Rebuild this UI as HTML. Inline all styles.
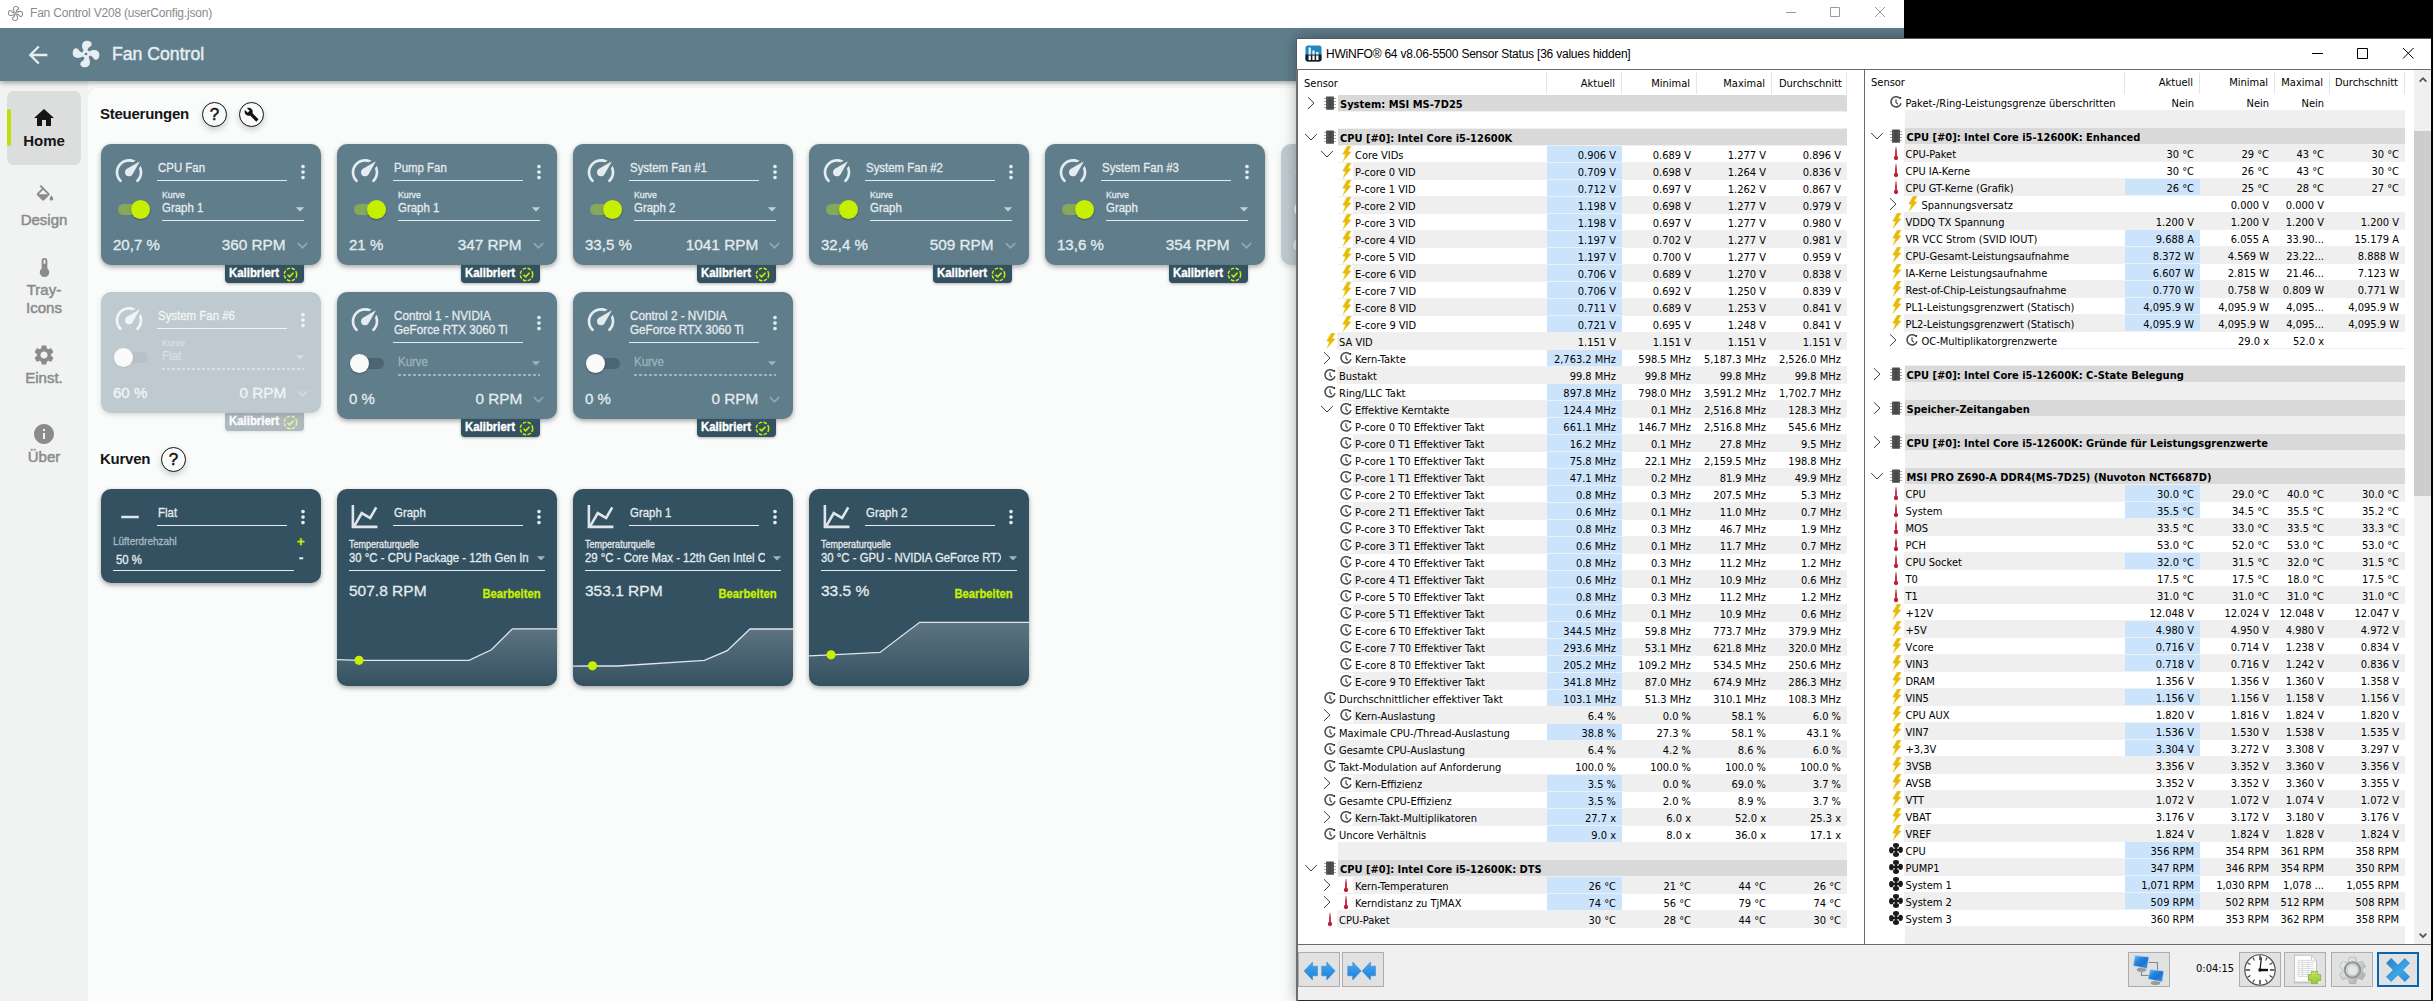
<!DOCTYPE html><html lang="de"><head><meta charset="utf-8"><title>Fan Control</title><style>
*{box-sizing:border-box;margin:0;padding:0}
html,body{width:2433px;height:1001px;overflow:hidden;background:#fff}
body{position:relative;font-family:"Liberation Sans",sans-serif;color:#000}
.abs,.fc *,.hw *{position:absolute}
svg{overflow:visible}
.sx{display:inline-block;position:static!important;transform-origin:0 50%;white-space:pre}
.sxr{display:inline-block;position:static!important;transform-origin:100% 50%;white-space:pre}
/* ---------- Fan Control ---------- */
.fc{position:absolute;left:0;top:0;width:1904px;height:1001px;background:#fafbfb;overflow:hidden}
.fc .tb{left:0;top:0;width:1904px;height:28px;background:#fff}
.fc .tbt{left:30px;top:6px;font-size:12px;line-height:14px;color:#8a8a8a;white-space:pre;letter-spacing:-.2px}
.fc .ab{left:0;top:28px;width:1904px;height:53px;background:#607d8b;box-shadow:0 2px 5px rgba(0,0,0,.35)}
.fc .abt{-webkit-text-stroke:.45px;left:112px;top:43px;font-size:18px;line-height:22px;color:#e6eef1;white-space:pre}
.fc .side{left:0;top:81px;width:88px;height:920px;background:#f1f3f3}
.fc .main{left:88px;top:88px;width:1816px;height:913px;background:#fafbfb;border-top-left-radius:9px;box-shadow:-1px 0 2px rgba(0,0,0,.10)}
.fc .nb{left:7px;width:74px;text-align:center;font-weight:400;-webkit-text-stroke:.5px;font-size:15px;line-height:18px;color:#8b8b8b;white-space:pre}
.fc .home{left:7px;top:91px;width:74px;height:74px;background:#dcdddd;border-radius:7px}
.fc .acc{left:7px;top:109px;width:4px;height:37px;background:#bfdf0a;border-radius:2px}
.fc .h1{margin-top:-1px;letter-spacing:-.25px;font-weight:700;font-size:15px;line-height:18px;color:#151515;white-space:pre}
.fc .cbtn{width:25px;height:25px;border-radius:50%;border:1.600px solid #111;background:#fafbfb;box-shadow:0 3px 6px rgba(0,0,0,.18)}
.card{-webkit-text-stroke:.3px;position:absolute;width:220px;border-radius:10px;background:#607d8b;box-shadow:0 2px 5px rgba(0,0,0,.35);color:#e4ecef}
.card.dk{background:#345161}
.card.dis{opacity:.38}
.card .nm{left:57px;top:16px;font-size:13px;line-height:15px;white-space:pre}
.card .nm2{left:57px;top:17px;font-size:13px;line-height:14px;white-space:pre}
.card .ul{left:56px;height:1px;width:130px;background:#e4ecef}
.card .lbl{left:61px;top:45px;font-size:9.5px;line-height:11px;white-space:pre}
.card .sel{left:61px;top:56px;font-size:13px;line-height:15px;white-space:pre}
.card .sul{left:61px;top:76px;width:142px;height:1px;background:#e4ecef}
.card .big{font-size:15.5px;line-height:18px;white-space:pre}
.tag{-webkit-text-stroke:.35px;position:absolute;width:79px;height:18px;background:#345161;border-radius:0 0 4px 4px;box-shadow:0 1px 3px rgba(0,0,0,.3);color:#fff;font-weight:700;font-size:12px;line-height:17px}
.tag.dis{opacity:.38}
.tag .t{left:4px;top:0;white-space:pre}
.lime{color:#c6f000}
/* ---------- HWiNFO ---------- */
.hw{position:absolute;left:1297px;top:38px;width:1136px;height:963px;background:#f0f0f0;border:1px solid #4f5b62;box-shadow:0 0 14px rgba(0,0,0,.35)}
.hwl{position:absolute;left:0;top:0;width:2433px;height:1001px;font-family:"DejaVu Sans Condensed","Liberation Sans",sans-serif;font-size:11px;line-height:16px;pointer-events:none}
.hwl>*{position:absolute;white-space:pre}
.hwl .st{height:16px;background:#efefef}
.hwl .gh{height:16px;background:#d9d9d9}
.hwl .hl{height:16px;background:#cce4fb}
.hwl .gt{font-weight:700;height:17px;line-height:20px}
.hwl .nm{height:17px;line-height:20px}
.hwl .v{height:17px;line-height:20px;text-align:right}
.hwl .ic{height:17px}
.hwl .ch{height:20px;line-height:20px;top:73px}
.hwl .chr{height:20px;line-height:20px;top:73px;text-align:right}
.hwl .sep{top:72px;width:1px;height:22px;background:#e5e5e5}
.tbb{width:42px;height:35px;background:#e1e1e1;border:1px solid #adadad}

</style></head><body>
<svg width="0" height="0" style="position:absolute"><defs><path id="p-home" d="M10 20v-6h4v6h5v-8h3L12 3 2 12h3v8z"/><path id="p-fill" d="M16.56 8.94L7.62 0 6.21 1.41l2.38 2.38-5.15 5.15c-.59.59-.59 1.54 0 2.12l5.5 5.5c.29.29.68.44 1.06.44s.77-.15 1.06-.44l5.5-5.5c.59-.58.59-1.53 0-2.12zM5.21 10L10 5.21 14.79 10H5.21zM19 11.5s-2 2.17-2 3.5c0 1.1.9 2 2 2s2-.9 2-2c0-1.33-2-3.5-2-3.5z"/><path id="p-therm" d="M15 13V5a3 3 0 0 0-6 0v8a5 5 0 1 0 6 0m-3-9a1 1 0 0 1 1 1v3h-2V5a1 1 0 0 1 1-1z"/><path id="p-gear" d="M19.14,12.94c0.04-0.3,0.06-0.61,0.06-0.94c0-0.32-0.02-0.64-0.07-0.94l2.03-1.58c0.18-0.14,0.23-0.41,0.12-0.61 l-1.92-3.32c-0.12-0.22-0.37-0.29-0.59-0.22l-2.39,0.96c-0.5-0.38-1.03-0.7-1.62-0.94L14.4,2.81c-0.04-0.24-0.24-0.41-0.48-0.41 h-3.84c-0.24,0-0.43,0.17-0.47,0.41L9.25,5.35C8.66,5.59,8.12,5.92,7.63,6.29L5.24,5.33c-0.22-0.08-0.47,0-0.59,0.22L2.74,8.87 C2.62,9.08,2.66,9.34,2.86,9.48l2.03,1.58C4.84,11.36,4.8,11.69,4.8,12s0.02,0.64,0.07,0.94l-2.03,1.58 c-0.18,0.14-0.23,0.41-0.12,0.61l1.92,3.32c0.12,0.22,0.37,0.29,0.59,0.22l2.39-0.96c0.5,0.38,1.03,0.7,1.62,0.94l0.36,2.54 c0.05,0.24,0.24,0.41,0.48,0.41h3.84c0.24,0,0.44-0.17,0.47-0.41l0.36-2.54c0.59-0.24,1.13-0.56,1.62-0.94l2.39,0.96 c0.22,0.08,0.47,0,0.59-0.22l1.92-3.32c0.12-0.22,0.07-0.47-0.12-0.61L19.14,12.94z M12,15.6c-1.98,0-3.6-1.62-3.6-3.6 s1.62-3.6,3.6-3.6s3.6,1.62,3.6,3.6S13.98,15.6,12,15.6z"/><path id="p-info" d="M12 2C6.48 2 2 6.48 2 12s4.48 10 10 10 10-4.48 10-10S17.52 2 12 2zm1 15h-2v-6h2v6zm0-8h-2V7h2v2z"/><path id="p-back" d="M20 11H7.83l5.59-5.59L12 4l-8 8 8 8 1.41-1.41L7.83 13H20v-2z"/><path id="p-fan" d="M12,11A1,1 0 0,0 11,12A1,1 0 0,0 12,13A1,1 0 0,0 13,12A1,1 0 0,0 12,11M12.5,2C17,2 17.11,5.57 14.75,6.75C13.76,7.24 13.32,8.29 13.13,9.22C13.61,9.42 14.03,9.73 14.35,10.13C18.05,8.13 22.03,8.92 22.03,12.5C22.03,17 18.46,17.1 17.28,14.73C16.78,13.74 15.72,13.3 14.79,13.11C14.59,13.59 14.28,14 13.88,14.34C15.87,18.03 15.08,22 11.5,22C7,22 6.91,18.42 9.27,17.24C10.25,16.75 10.69,15.71 10.89,14.79C10.4,14.59 9.97,14.27 9.65,13.87C5.96,15.85 2,15.07 2,11.5C2,7 5.56,6.89 6.74,9.26C7.24,10.25 8.29,10.68 9.22,10.87C9.41,10.39 9.73,9.97 10.14,9.65C8.15,5.96 8.94,2 12.5,2Z"/><path id="p-gauge" d="M12,16A3,3 0 0,1 9,13C9,11.88 9.61,10.9 10.5,10.39L20.21,4.77L14.68,14.35C14.18,15.33 13.17,16 12,16M12,3C13.81,3 15.5,3.5 16.97,4.32L14.87,5.53C14,5.19 13,5 12,5A8,8 0 0,0 4,13C4,15.21 4.89,17.21 6.34,18.65H6.35C6.74,19.04 6.74,19.67 6.35,20.06C5.96,20.45 5.32,20.45 4.93,20.07V20.07C3.12,18.26 2,15.76 2,13A10,10 0 0,1 12,3M22,13C22,15.76 20.88,18.26 19.07,20.07V20.07C18.68,20.45 18.05,20.45 17.66,20.06C17.27,19.67 17.27,19.04 17.66,18.65V18.65C19.11,17.2 20,15.21 20,13C20,12 19.81,11 19.46,10.1L20.67,8C21.5,9.5 22,11.18 22,13Z"/><path id="p-wrench" d="M22.7,19L13.6,9.9C14.5,7.6 14,4.9 12.1,3C10.1,1 7.1,0.6 4.7,1.7L9,6L6,9L1.6,4.7C0.4,7.1 0.9,10.1 2.9,12.1C4.8,14 7.5,14.5 9.8,13.6L18.9,22.7C19.3,23.1 19.9,23.1 20.3,22.7L22.6,20.4C23.1,20 23.1,19.3 22.7,19Z"/><path id="p-chart" d="M16,11.78L20.24,4.45L21.97,5.45L16.74,14.5L10.23,10.75L5.46,19H22V21H2V3H4V17.54L9.5,8L16,11.78Z"/><path id="p-chev" d="M7.41 8.59L12 13.17l4.59-4.59L18 10l-6 6-6-6z"/><path id="p-drop" d="M7 10l5 5 5-5z"/><path id="p-minus" d="M19 13H5v-2h14v2z"/><path id="p-dots" d="M12 8c1.1 0 2-.9 2-2s-.9-2-2-2-2 .9-2 2 .9 2 2 2zm0 2c-1.1 0-2 .9-2 2s.9 2 2 2 2-.9 2-2-.9-2-2-2zm0 6c-1.1 0-2 .9-2 2s.9 2 2 2 2-.9 2-2-.9-2-2-2z"/><linearGradient id="gfill" x1="0" y1="0" x2="0" y2="1"><stop offset="0" stop-color="#fff" stop-opacity=".2"/><stop offset="1" stop-color="#fff" stop-opacity="0"/></linearGradient></defs></svg>
<div class="fc">
<div class="main"></div>
<div class="side"></div>
<div class="ab"></div>
<div class="tb"></div>
<svg style="left:7px;top:5px" width="17" height="17" viewBox="0 0 24 24" fill="none" stroke="#8a8a8a" stroke-width="1.5"><use href="#p-fan"/></svg>
<div class="tbt">Fan Control V208 (userConfig.json)</div>
<svg style="left:1786px;top:6px" width="100" height="12" viewBox="0 0 100 12" fill="none" stroke="#9a9a9a" stroke-width="1"><path d="M0 6.5h10M44.5 1.5h9v9h-9zM89 1l10 10M99 1l-10 10"/></svg>
<svg style="left:24px;top:40.5px" width="28" height="28" viewBox="0 0 24 24" fill="#e6eef1" ><use href="#p-back"/></svg>
<svg style="left:70px;top:38px" width="32" height="32" viewBox="0 0 24 24" fill="#e6eef1" ><use href="#p-fan"/></svg>
<div class="abt"><span class="sx" style="transform:scaleX(0.98)">Fan Control</span></div>
<div class="home"></div><div class="acc"></div>
<svg style="left:32px;top:106px" width="24" height="24" viewBox="0 0 24 24" fill="#151515" ><use href="#p-home"/></svg>
<div class="nb" style="top:132px;color:#151515;font-weight:700;-webkit-text-stroke:0">Home</div>
<svg style="left:33.5px;top:185px" width="22" height="22" viewBox="0 0 24 24" fill="#8b8b8b" ><use href="#p-fill"/></svg>
<div class="nb" style="top:211px">Design</div>
<svg style="left:33px;top:256px" width="23" height="23" viewBox="0 0 24 24" fill="#8b8b8b" ><use href="#p-therm"/></svg>
<div class="nb" style="top:281px">Tray-</div><div class="nb" style="top:299px">Icons</div>
<svg style="left:32px;top:343px" width="24" height="24" viewBox="0 0 24 24" fill="#8b8b8b" ><use href="#p-gear"/></svg>
<div class="nb" style="top:369px">Einst.</div>
<svg style="left:32px;top:422px" width="24" height="24" viewBox="0 0 24 24" fill="#8b8b8b" ><use href="#p-info"/></svg>
<div class="nb" style="top:448px">Über</div>
<div class="h1" style="left:100px;top:106px">Steuerungen</div>
<div class="cbtn" style="left:202px;top:102px"></div><div style="left:202px;top:102px;width:25px;height:25px;text-align:center;font-weight:400;-webkit-text-stroke:.5px;font-size:17px;line-height:25px;color:#111">?</div>
<div class="cbtn" style="left:239px;top:102px"></div><svg style="left:244px;top:107px" width="15" height="15" viewBox="0 0 24 24" fill="#111" ><use href="#p-wrench"/></svg>
<div class="h1" style="left:100px;top:451px">Kurven</div>
<div class="cbtn" style="left:161px;top:447px"></div><div style="left:161px;top:447px;width:25px;height:25px;text-align:center;font-weight:400;-webkit-text-stroke:.5px;font-size:17px;line-height:25px;color:#111">?</div>
<div class="card" style="left:101px;top:144px;height:121px"><svg style="left:12px;top:11px" width="32" height="32" viewBox="0 0 24 24" fill="#e4ecef" ><use href="#p-gauge"/></svg><div class="nm"><span class="sx" style="transform:scaleX(0.88)">CPU Fan</span></div><div class="ul" style="top:36px"></div><svg style="left:191px;top:17px" width="22" height="22" viewBox="0 0 24 24" fill="#e4ecef" ><use href="#p-dots"/></svg><div style="left:17px;top:60px;width:30px;height:11px;border-radius:6px;background:#86a85a"></div><div style="left:30px;top:56px;width:19px;height:19px;border-radius:50%;background:#c6f000;box-shadow:0 1px 2px rgba(0,0,0,.3)"></div><div class="lbl"><span class="sx" style="transform:scaleX(0.92)">Kurve</span></div><div class="sel"><span class="sx" style="transform:scaleX(0.88)">Graph 1</span></div><svg style="left:189px;top:55px" width="20" height="20" viewBox="0 0 24 24" fill="#c3d0d6" ><use href="#p-drop"/></svg><div class="sul"></div><div class="big" style="left:12px;top:92px"><span class="sx" style="transform:scaleX(0.97)">20,7 %</span></div><div class="big" style="right:35px;top:92px;text-align:right"><span class="sxr" style="transform:scaleX(0.99)">360 RPM</span></div><svg style="left:191px;top:91px" width="21" height="21" viewBox="0 0 24 24" fill="#8fa6b1" ><use href="#p-chev"/></svg></div><div class="tag" style="left:225px;top:265px"><div class="t"><span class="sx" style="transform:scaleX(0.95)">Kalibriert</span></div><svg style="left:58px;top:1.500px" width="15" height="15" viewBox="0 0 14 14" fill="none" stroke="#c6f000" stroke-width="1.4"><circle cx="7" cy="7" r="5.8" stroke-dasharray="3.2 1.4"/><path d="M4.2 7.2l2 2 3.6-3.9" stroke-width="1.5"/></svg></div>
<div class="card" style="left:337px;top:144px;height:121px"><svg style="left:12px;top:11px" width="32" height="32" viewBox="0 0 24 24" fill="#e4ecef" ><use href="#p-gauge"/></svg><div class="nm"><span class="sx" style="transform:scaleX(0.88)">Pump Fan</span></div><div class="ul" style="top:36px"></div><svg style="left:191px;top:17px" width="22" height="22" viewBox="0 0 24 24" fill="#e4ecef" ><use href="#p-dots"/></svg><div style="left:17px;top:60px;width:30px;height:11px;border-radius:6px;background:#86a85a"></div><div style="left:30px;top:56px;width:19px;height:19px;border-radius:50%;background:#c6f000;box-shadow:0 1px 2px rgba(0,0,0,.3)"></div><div class="lbl"><span class="sx" style="transform:scaleX(0.92)">Kurve</span></div><div class="sel"><span class="sx" style="transform:scaleX(0.88)">Graph 1</span></div><svg style="left:189px;top:55px" width="20" height="20" viewBox="0 0 24 24" fill="#c3d0d6" ><use href="#p-drop"/></svg><div class="sul"></div><div class="big" style="left:12px;top:92px"><span class="sx" style="transform:scaleX(0.97)">21 %</span></div><div class="big" style="right:35px;top:92px;text-align:right"><span class="sxr" style="transform:scaleX(0.99)">347 RPM</span></div><svg style="left:191px;top:91px" width="21" height="21" viewBox="0 0 24 24" fill="#8fa6b1" ><use href="#p-chev"/></svg></div><div class="tag" style="left:461px;top:265px"><div class="t"><span class="sx" style="transform:scaleX(0.95)">Kalibriert</span></div><svg style="left:58px;top:1.500px" width="15" height="15" viewBox="0 0 14 14" fill="none" stroke="#c6f000" stroke-width="1.4"><circle cx="7" cy="7" r="5.8" stroke-dasharray="3.2 1.4"/><path d="M4.2 7.2l2 2 3.6-3.9" stroke-width="1.5"/></svg></div>
<div class="card" style="left:573px;top:144px;height:121px"><svg style="left:12px;top:11px" width="32" height="32" viewBox="0 0 24 24" fill="#e4ecef" ><use href="#p-gauge"/></svg><div class="nm"><span class="sx" style="transform:scaleX(0.88)">System Fan #1</span></div><div class="ul" style="top:36px"></div><svg style="left:191px;top:17px" width="22" height="22" viewBox="0 0 24 24" fill="#e4ecef" ><use href="#p-dots"/></svg><div style="left:17px;top:60px;width:30px;height:11px;border-radius:6px;background:#86a85a"></div><div style="left:30px;top:56px;width:19px;height:19px;border-radius:50%;background:#c6f000;box-shadow:0 1px 2px rgba(0,0,0,.3)"></div><div class="lbl"><span class="sx" style="transform:scaleX(0.92)">Kurve</span></div><div class="sel"><span class="sx" style="transform:scaleX(0.88)">Graph 2</span></div><svg style="left:189px;top:55px" width="20" height="20" viewBox="0 0 24 24" fill="#c3d0d6" ><use href="#p-drop"/></svg><div class="sul"></div><div class="big" style="left:12px;top:92px"><span class="sx" style="transform:scaleX(0.97)">33,5 %</span></div><div class="big" style="right:35px;top:92px;text-align:right"><span class="sxr" style="transform:scaleX(0.99)">1041 RPM</span></div><svg style="left:191px;top:91px" width="21" height="21" viewBox="0 0 24 24" fill="#8fa6b1" ><use href="#p-chev"/></svg></div><div class="tag" style="left:697px;top:265px"><div class="t"><span class="sx" style="transform:scaleX(0.95)">Kalibriert</span></div><svg style="left:58px;top:1.500px" width="15" height="15" viewBox="0 0 14 14" fill="none" stroke="#c6f000" stroke-width="1.4"><circle cx="7" cy="7" r="5.8" stroke-dasharray="3.2 1.4"/><path d="M4.2 7.2l2 2 3.6-3.9" stroke-width="1.5"/></svg></div>
<div class="card" style="left:809px;top:144px;height:121px"><svg style="left:12px;top:11px" width="32" height="32" viewBox="0 0 24 24" fill="#e4ecef" ><use href="#p-gauge"/></svg><div class="nm"><span class="sx" style="transform:scaleX(0.88)">System Fan #2</span></div><div class="ul" style="top:36px"></div><svg style="left:191px;top:17px" width="22" height="22" viewBox="0 0 24 24" fill="#e4ecef" ><use href="#p-dots"/></svg><div style="left:17px;top:60px;width:30px;height:11px;border-radius:6px;background:#86a85a"></div><div style="left:30px;top:56px;width:19px;height:19px;border-radius:50%;background:#c6f000;box-shadow:0 1px 2px rgba(0,0,0,.3)"></div><div class="lbl"><span class="sx" style="transform:scaleX(0.92)">Kurve</span></div><div class="sel"><span class="sx" style="transform:scaleX(0.88)">Graph</span></div><svg style="left:189px;top:55px" width="20" height="20" viewBox="0 0 24 24" fill="#c3d0d6" ><use href="#p-drop"/></svg><div class="sul"></div><div class="big" style="left:12px;top:92px"><span class="sx" style="transform:scaleX(0.97)">32,4 %</span></div><div class="big" style="right:35px;top:92px;text-align:right"><span class="sxr" style="transform:scaleX(0.99)">509 RPM</span></div><svg style="left:191px;top:91px" width="21" height="21" viewBox="0 0 24 24" fill="#8fa6b1" ><use href="#p-chev"/></svg></div><div class="tag" style="left:933px;top:265px"><div class="t"><span class="sx" style="transform:scaleX(0.95)">Kalibriert</span></div><svg style="left:58px;top:1.500px" width="15" height="15" viewBox="0 0 14 14" fill="none" stroke="#c6f000" stroke-width="1.4"><circle cx="7" cy="7" r="5.8" stroke-dasharray="3.2 1.4"/><path d="M4.2 7.2l2 2 3.6-3.9" stroke-width="1.5"/></svg></div>
<div class="card" style="left:1045px;top:144px;height:121px"><svg style="left:12px;top:11px" width="32" height="32" viewBox="0 0 24 24" fill="#e4ecef" ><use href="#p-gauge"/></svg><div class="nm"><span class="sx" style="transform:scaleX(0.88)">System Fan #3</span></div><div class="ul" style="top:36px"></div><svg style="left:191px;top:17px" width="22" height="22" viewBox="0 0 24 24" fill="#e4ecef" ><use href="#p-dots"/></svg><div style="left:17px;top:60px;width:30px;height:11px;border-radius:6px;background:#86a85a"></div><div style="left:30px;top:56px;width:19px;height:19px;border-radius:50%;background:#c6f000;box-shadow:0 1px 2px rgba(0,0,0,.3)"></div><div class="lbl"><span class="sx" style="transform:scaleX(0.92)">Kurve</span></div><div class="sel"><span class="sx" style="transform:scaleX(0.88)">Graph</span></div><svg style="left:189px;top:55px" width="20" height="20" viewBox="0 0 24 24" fill="#c3d0d6" ><use href="#p-drop"/></svg><div class="sul"></div><div class="big" style="left:12px;top:92px"><span class="sx" style="transform:scaleX(0.97)">13,6 %</span></div><div class="big" style="right:35px;top:92px;text-align:right"><span class="sxr" style="transform:scaleX(0.99)">354 RPM</span></div><svg style="left:191px;top:91px" width="21" height="21" viewBox="0 0 24 24" fill="#8fa6b1" ><use href="#p-chev"/></svg></div><div class="tag" style="left:1169px;top:265px"><div class="t"><span class="sx" style="transform:scaleX(0.95)">Kalibriert</span></div><svg style="left:58px;top:1.500px" width="15" height="15" viewBox="0 0 14 14" fill="none" stroke="#c6f000" stroke-width="1.4"><circle cx="7" cy="7" r="5.8" stroke-dasharray="3.2 1.4"/><path d="M4.2 7.2l2 2 3.6-3.9" stroke-width="1.5"/></svg></div>
<div class="card dis" style="left:1281px;top:144px;height:121px"><svg style="left:12px;top:11px" width="32" height="32" viewBox="0 0 24 24" fill="#e4ecef" ><use href="#p-gauge"/></svg><div class="nm"><span class="sx" style="transform:scaleX(0.88)">System Fan #4</span></div><div class="ul" style="top:36px"></div><svg style="left:191px;top:17px" width="22" height="22" viewBox="0 0 24 24" fill="#e4ecef" ><use href="#p-dots"/></svg><div style="left:17px;top:60px;width:30px;height:11px;border-radius:6px;background:#4b6572"></div><div style="left:13px;top:56px;width:19px;height:19px;border-radius:50%;background:#fafafa;box-shadow:0 1px 2px rgba(0,0,0,.3)"></div><div class="lbl" style="color:#9fb3bd"><span class="sx" style="transform:scaleX(0.92)">Kurve</span></div><div class="sel" style="color:#9fb3bd"><span class="sx" style="transform:scaleX(0.88)">Flat</span></div><svg style="left:189px;top:55px" width="20" height="20" viewBox="0 0 24 24" fill="#9fb3bd" ><use href="#p-drop"/></svg><div class="sul" style="height:1.500px;background:repeating-linear-gradient(90deg,#9fb3bd 0 3px,transparent 3px 5px)"></div><div class="big" style="left:12px;top:92px"><span class="sx" style="transform:scaleX(0.97)">60 %</span></div><div class="big" style="right:35px;top:92px;text-align:right"><span class="sxr" style="transform:scaleX(0.99)">0 RPM</span></div><svg style="left:191px;top:91px" width="21" height="21" viewBox="0 0 24 24" fill="#8fa6b1" ><use href="#p-chev"/></svg></div><div class="tag dis" style="left:1405px;top:265px"><div class="t"><span class="sx" style="transform:scaleX(0.95)">Kalibriert</span></div><svg style="left:58px;top:1.500px" width="15" height="15" viewBox="0 0 14 14" fill="none" stroke="#c6f000" stroke-width="1.4"><circle cx="7" cy="7" r="5.8" stroke-dasharray="3.2 1.4"/><path d="M4.2 7.2l2 2 3.6-3.9" stroke-width="1.5"/></svg></div>
<div class="card dis" style="left:101px;top:292px;height:121px"><svg style="left:12px;top:11px" width="32" height="32" viewBox="0 0 24 24" fill="#e4ecef" ><use href="#p-gauge"/></svg><div class="nm"><span class="sx" style="transform:scaleX(0.88)">System Fan #6</span></div><div class="ul" style="top:36px"></div><svg style="left:191px;top:17px" width="22" height="22" viewBox="0 0 24 24" fill="#e4ecef" ><use href="#p-dots"/></svg><div style="left:17px;top:60px;width:30px;height:11px;border-radius:6px;background:#4b6572"></div><div style="left:13px;top:56px;width:19px;height:19px;border-radius:50%;background:#fafafa;box-shadow:0 1px 2px rgba(0,0,0,.3)"></div><div class="lbl" style="color:#9fb3bd"><span class="sx" style="transform:scaleX(0.92)">Kurve</span></div><div class="sel" style="color:#9fb3bd"><span class="sx" style="transform:scaleX(0.88)">Flat</span></div><svg style="left:189px;top:55px" width="20" height="20" viewBox="0 0 24 24" fill="#9fb3bd" ><use href="#p-drop"/></svg><div class="sul" style="height:1.500px;background:repeating-linear-gradient(90deg,#9fb3bd 0 3px,transparent 3px 5px)"></div><div class="big" style="left:12px;top:92px"><span class="sx" style="transform:scaleX(0.97)">60 %</span></div><div class="big" style="right:35px;top:92px;text-align:right"><span class="sxr" style="transform:scaleX(0.99)">0 RPM</span></div><svg style="left:191px;top:91px" width="21" height="21" viewBox="0 0 24 24" fill="#8fa6b1" ><use href="#p-chev"/></svg></div><div class="tag dis" style="left:225px;top:413px"><div class="t"><span class="sx" style="transform:scaleX(0.95)">Kalibriert</span></div><svg style="left:58px;top:1.500px" width="15" height="15" viewBox="0 0 14 14" fill="none" stroke="#c6f000" stroke-width="1.4"><circle cx="7" cy="7" r="5.8" stroke-dasharray="3.2 1.4"/><path d="M4.2 7.2l2 2 3.6-3.9" stroke-width="1.5"/></svg></div>
<div class="card" style="left:337px;top:292px;height:127px"><svg style="left:12px;top:12px" width="32" height="32" viewBox="0 0 24 24" fill="#e4ecef" ><use href="#p-gauge"/></svg><div class="nm2"><span class="sx" style="transform:scaleX(0.9)">Control 1 - NVIDIA</span><br><span class="sx" style="transform:scaleX(0.9)">GeForce RTX 3060 Ti</span></div><div class="ul" style="top:50px"></div><svg style="left:191px;top:20px" width="22" height="22" viewBox="0 0 24 24" fill="#e4ecef" ><use href="#p-dots"/></svg><div style="left:17px;top:66px;width:30px;height:11px;border-radius:6px;background:#4b6572"></div><div style="left:13px;top:62px;width:19px;height:19px;border-radius:50%;background:#fafafa;box-shadow:0 1px 2px rgba(0,0,0,.3)"></div><div class="sel" style="color:#9fb3bd;top:62px"><span class="sx" style="transform:scaleX(0.88)">Kurve</span></div><svg style="left:189px;top:61px" width="20" height="20" viewBox="0 0 24 24" fill="#9fb3bd" ><use href="#p-drop"/></svg><div class="sul" style="top:82px;height:1.500px;background:repeating-linear-gradient(90deg,#9fb3bd 0 3px,transparent 3px 5px)"></div><div class="big" style="left:12px;top:98px"><span class="sx" style="transform:scaleX(0.97)">0 %</span></div><div class="big" style="right:35px;top:98px;text-align:right"><span class="sxr" style="transform:scaleX(0.99)">0 RPM</span></div><svg style="left:191px;top:97px" width="21" height="21" viewBox="0 0 24 24" fill="#8fa6b1" ><use href="#p-chev"/></svg></div><div class="tag" style="left:461px;top:419px"><div class="t"><span class="sx" style="transform:scaleX(0.95)">Kalibriert</span></div><svg style="left:58px;top:1.500px" width="15" height="15" viewBox="0 0 14 14" fill="none" stroke="#c6f000" stroke-width="1.4"><circle cx="7" cy="7" r="5.8" stroke-dasharray="3.2 1.4"/><path d="M4.2 7.2l2 2 3.6-3.9" stroke-width="1.5"/></svg></div>
<div class="card" style="left:573px;top:292px;height:127px"><svg style="left:12px;top:12px" width="32" height="32" viewBox="0 0 24 24" fill="#e4ecef" ><use href="#p-gauge"/></svg><div class="nm2"><span class="sx" style="transform:scaleX(0.9)">Control 2 - NVIDIA</span><br><span class="sx" style="transform:scaleX(0.9)">GeForce RTX 3060 Ti</span></div><div class="ul" style="top:50px"></div><svg style="left:191px;top:20px" width="22" height="22" viewBox="0 0 24 24" fill="#e4ecef" ><use href="#p-dots"/></svg><div style="left:17px;top:66px;width:30px;height:11px;border-radius:6px;background:#4b6572"></div><div style="left:13px;top:62px;width:19px;height:19px;border-radius:50%;background:#fafafa;box-shadow:0 1px 2px rgba(0,0,0,.3)"></div><div class="sel" style="color:#9fb3bd;top:62px"><span class="sx" style="transform:scaleX(0.88)">Kurve</span></div><svg style="left:189px;top:61px" width="20" height="20" viewBox="0 0 24 24" fill="#9fb3bd" ><use href="#p-drop"/></svg><div class="sul" style="top:82px;height:1.500px;background:repeating-linear-gradient(90deg,#9fb3bd 0 3px,transparent 3px 5px)"></div><div class="big" style="left:12px;top:98px"><span class="sx" style="transform:scaleX(0.97)">0 %</span></div><div class="big" style="right:35px;top:98px;text-align:right"><span class="sxr" style="transform:scaleX(0.99)">0 RPM</span></div><svg style="left:191px;top:97px" width="21" height="21" viewBox="0 0 24 24" fill="#8fa6b1" ><use href="#p-chev"/></svg></div><div class="tag" style="left:697px;top:419px"><div class="t"><span class="sx" style="transform:scaleX(0.95)">Kalibriert</span></div><svg style="left:58px;top:1.500px" width="15" height="15" viewBox="0 0 14 14" fill="none" stroke="#c6f000" stroke-width="1.4"><circle cx="7" cy="7" r="5.8" stroke-dasharray="3.2 1.4"/><path d="M4.2 7.2l2 2 3.6-3.9" stroke-width="1.5"/></svg></div>
<div class="card dk" style="left:101px;top:489px;height:94px">
<svg style="left:13.5px;top:13px" width="30" height="30" viewBox="0 0 24 24" fill="#dfe6e9" ><use href="#p-minus"/></svg>
<div class="nm"><span class="sx" style="transform:scaleX(0.88)">Flat</span></div><div class="ul" style="top:36px"></div>
<svg style="left:191px;top:17px" width="22" height="22" viewBox="0 0 24 24" fill="#e4ecef" ><use href="#p-dots"/></svg>
<div class="lbl" style="left:12px;top:47px;color:#a9bac3;font-size:10.500px"><span class="sx" style="transform:scaleX(0.95)">Lüfterdrehzahl</span></div>
<div class="sel" style="left:15px;top:64px;font-size:12px"><span class="sx" style="transform:scaleX(0.95)">50 %</span></div>
<div class="sul" style="left:12px;top:81px;width:181px"></div>
<div class="lime" style="left:196px;top:46px;font-weight:700;font-size:13px;line-height:14px">+</div>
<div style="left:198px;top:62px;font-weight:700;font-size:13px;line-height:14px;color:#e4ecef">-</div>
</div>
<div class="card dk" style="left:337px;top:489px;height:197px;overflow:hidden"><svg style="left:12px;top:12px" width="31" height="31" viewBox="0 0 24 24" fill="#dfe6e9" ><use href="#p-chart"/></svg><div class="nm"><span class="sx" style="transform:scaleX(0.88)">Graph</span></div><div class="ul" style="top:36px"></div><svg style="left:191px;top:17px" width="22" height="22" viewBox="0 0 24 24" fill="#e4ecef" ><use href="#p-dots"/></svg><div class="lbl" style="left:12px;top:50px;font-size:10.500px"><span class="sx" style="transform:scaleX(0.86)">Temperaturquelle</span></div><div class="sel" style="left:12px;top:61px;width:180px;overflow:hidden"><span class="sx" style="transform:scaleX(0.875)">30 °C - CPU Package - 12th Gen Intel Core</span></div><svg style="left:194px;top:59px" width="20" height="20" viewBox="0 0 24 24" fill="#9fb3bd" ><use href="#p-drop"/></svg><div class="sul" style="left:12px;top:81px;width:196px"></div><div class="big" style="left:12px;top:93px">507.8 RPM</div><div class="lime" style="right:16px;top:98px;font-weight:700;font-size:12.5px;line-height:15px;white-space:pre"><span class="sxr" style="transform:scaleX(0.9)">Bearbeiten</span></div><svg style="left:0;top:0" width="220" height="197" viewBox="0 0 220 197"><polygon points="0.0,170.7 22.0,171.3 132.0,171.3 154.4,160.8 175.4,139.8 220.0,139.8 220,197 0,197" fill="url(#gfill)"/><polyline points="0.0,170.7 22.0,171.3 132.0,171.3 154.4,160.8 175.4,139.8 220.0,139.8" fill="none" stroke="#dfe6e9" stroke-width="1.3"/><circle cx="22.0" cy="171.3" r="4.6" fill="#c6f000"/></svg></div>
<div class="card dk" style="left:573px;top:489px;height:197px;overflow:hidden"><svg style="left:12px;top:12px" width="31" height="31" viewBox="0 0 24 24" fill="#dfe6e9" ><use href="#p-chart"/></svg><div class="nm"><span class="sx" style="transform:scaleX(0.88)">Graph 1</span></div><div class="ul" style="top:36px"></div><svg style="left:191px;top:17px" width="22" height="22" viewBox="0 0 24 24" fill="#e4ecef" ><use href="#p-dots"/></svg><div class="lbl" style="left:12px;top:50px;font-size:10.500px"><span class="sx" style="transform:scaleX(0.86)">Temperaturquelle</span></div><div class="sel" style="left:12px;top:61px;width:180px;overflow:hidden"><span class="sx" style="transform:scaleX(0.875)">29 °C - Core Max - 12th Gen Intel Core</span></div><svg style="left:194px;top:59px" width="20" height="20" viewBox="0 0 24 24" fill="#9fb3bd" ><use href="#p-drop"/></svg><div class="sul" style="left:12px;top:81px;width:196px"></div><div class="big" style="left:12px;top:93px">353.1 RPM</div><div class="lime" style="right:16px;top:98px;font-weight:700;font-size:12.5px;line-height:15px;white-space:pre"><span class="sxr" style="transform:scaleX(0.9)">Bearbeiten</span></div><svg style="left:0;top:0" width="220" height="197" viewBox="0 0 220 197"><polygon points="0.0,177.2 19.5,176.8 44.7,177.0 131.5,171.4 154.2,161.6 177.0,140.0 220.0,140.0 220,197 0,197" fill="url(#gfill)"/><polyline points="0.0,177.2 19.5,176.8 44.7,177.0 131.5,171.4 154.2,161.6 177.0,140.0 220.0,140.0" fill="none" stroke="#dfe6e9" stroke-width="1.3"/><circle cx="19.5" cy="176.8" r="4.6" fill="#c6f000"/></svg></div>
<div class="card dk" style="left:809px;top:489px;height:197px;overflow:hidden"><svg style="left:12px;top:12px" width="31" height="31" viewBox="0 0 24 24" fill="#dfe6e9" ><use href="#p-chart"/></svg><div class="nm"><span class="sx" style="transform:scaleX(0.88)">Graph 2</span></div><div class="ul" style="top:36px"></div><svg style="left:191px;top:17px" width="22" height="22" viewBox="0 0 24 24" fill="#e4ecef" ><use href="#p-dots"/></svg><div class="lbl" style="left:12px;top:50px;font-size:10.500px"><span class="sx" style="transform:scaleX(0.86)">Temperaturquelle</span></div><div class="sel" style="left:12px;top:61px;width:180px;overflow:hidden"><span class="sx" style="transform:scaleX(0.875)">30 °C - GPU - NVIDIA GeForce RTX 3060 Ti</span></div><svg style="left:194px;top:59px" width="20" height="20" viewBox="0 0 24 24" fill="#9fb3bd" ><use href="#p-drop"/></svg><div class="sul" style="left:12px;top:81px;width:196px"></div><div class="big" style="left:12px;top:93px">33.5 %</div><div class="lime" style="right:16px;top:98px;font-weight:700;font-size:12.5px;line-height:15px;white-space:pre"><span class="sxr" style="transform:scaleX(0.9)">Bearbeiten</span></div><svg style="left:0;top:0" width="220" height="197" viewBox="0 0 220 197"><polygon points="0.0,166.9 22.0,165.8 71.0,163.4 110.6,133.3 220.0,133.3 220,197 0,197" fill="url(#gfill)"/><polyline points="0.0,166.9 22.0,165.8 71.0,163.4 110.6,133.3 220.0,133.3" fill="none" stroke="#dfe6e9" stroke-width="1.3"/><circle cx="22.0" cy="165.8" r="4.6" fill="#c6f000"/></svg></div>
</div>
<div class="abs" style="left:1904px;top:0;width:529px;height:40px;background:#000"></div>
<svg width="0" height="0" style="position:absolute"><defs>
<symbol id="i-closed" viewBox="0 0 16 17"><path d="M5 2.300l6 5.800-6 5.800" fill="none" stroke="#3d3d3d" stroke-width="1"/></symbol>
<symbol id="i-open" viewBox="0 0 16 17"><path d="M2.200 5l5.800 6 5.800-6" fill="none" stroke="#3d3d3d" stroke-width="1"/></symbol>
<linearGradient id="gchip" x1="0" y1="0" x2="1" y2="0"><stop offset="0" stop-color="#5a5a5a"/><stop offset=".5" stop-color="#454545"/><stop offset="1" stop-color="#585858"/></linearGradient>
<linearGradient id="gtemp" x1="0" y1="0" x2="0" y2="1"><stop offset="0" stop-color="#d8d8d8"/><stop offset=".45" stop-color="#c0273a"/><stop offset="1" stop-color="#b81c30"/></linearGradient>
<symbol id="i-chip" viewBox="0 0 16 17"><path d="M2 3.500h12M2 6.500h12M2 9.500h12M2 12.500h12" stroke="#a6a6a6" stroke-width="1.200"/><rect x="4" y="1.400" width="8" height="13.400" rx=".6" fill="url(#gchip)"/></symbol>
<symbol id="i-bolt" viewBox="0 0 16 17"><path d="M9.200 0H13.200L10.300 5.300 13.200 6 5 15.400 7.400 8.700 4.600 7.900z" fill="#e6b810" stroke="#f2d93a" stroke-width=".5" stroke-linejoin="round"/></symbol>
<symbol id="i-clock" viewBox="0 0 16 17"><path d="M11.500 4A5.100 5.100 0 1 0 13 9.300" fill="none" stroke="#4a4a4a" stroke-width="1.500"/><circle cx="12.200" cy="4" r="1.050" fill="#222"/><path d="M8 5.200v3.300l1.800 1.700" fill="none" stroke="#4a4a4a" stroke-width="1.200"/></symbol>
<symbol id="i-temp" viewBox="0 0 16 17"><rect x="7.100" y="1.500" width="1.800" height="11" rx=".9" fill="url(#gtemp)"/><circle cx="8" cy="13" r="2.150" fill="#bb1d31"/></symbol>
<symbol id="i-fan" viewBox="0 0 16 17"><g transform="translate(8 8)" fill="#1b1b1b"><ellipse cx="0" cy="-4.500" rx="3" ry="2.400"/><ellipse cx="4.600" cy="-.2" rx="2.300" ry="3.100"/><ellipse cx="0" cy="4.500" rx="3" ry="2.400"/><ellipse cx="-4.600" cy=".2" rx="2.300" ry="3.100"/><circle r="2.100"/><path d="M-1-4h2v8h-2zM-4-1h8v2h-8z"/></g></symbol>
</defs></svg>
<div class="hw">
 <div style="left:-2px;top:-1px;width:1px;height:32px;background:#4f5b62"></div><div style="left:-1px;top:0;width:1135px;height:30px;background:#fff"></div>
 <svg style="left:7px;top:6px" width="17" height="17" viewBox="0 0 17 17"><rect x=".5" y=".5" width="16" height="16" rx="2.500" fill="#2287bd"/><path d="M.5 9.500h16v4.500a2.500 2.500 0 0 1-2.500 2.500h-11A2.500 2.500 0 0 1 .5 14z" fill="#161c21"/><path d="M4.700 2.500v7M8.500 5.500v4M12.300 7v2.500" stroke="#e4f2fa" stroke-width="2.300"/><path d="M4.700 10.500v4.500M8.500 10.500v4.500M12.300 10.500v4.500" stroke="#fff" stroke-width="2.300"/></svg>
 <div style="left:28px;top:8px;font-size:12px;line-height:15px;white-space:pre;letter-spacing:-.22px">HWiNFO® 64 v8.06-5500 Sensor Status [36 values hidden]</div>
 <svg style="left:1014px;top:9px" width="102" height="12" viewBox="0 0 102 12" fill="none" stroke="#000" stroke-width="1"><path d="M0 5.500h11M45.500 .5h10v10h-10zM91 0l10.500 10.500M101.500 0L91 10.500"/></svg>
 <!-- panes -->
 <div style="left:-2px;top:30px;width:1135px;height:876px;background:#fff;border-top:1px solid #6b6b6b;border-bottom:1px solid #6b6b6b;border-left:2px solid #6e6e6e"></div>
 <div style="left:565.700px;top:30px;width:1.500px;height:876px;background:#6b6b6b"></div>
 <!-- scrollbar -->
 <div style="left:1116px;top:31px;width:17px;height:874px;background:#f0f0f0"></div>
 <div style="left:1116px;top:92px;width:17px;height:365px;background:#cdcdcd"></div>
 <svg style="left:1120.500px;top:38px" width="8" height="5.300" viewBox="0 0 9 6"><path d="M.7 5.200L4.500 1.400l3.800 3.800" fill="none" stroke="#505050" stroke-width="2"/></svg>
 <svg style="left:1120.500px;top:894px" width="8" height="5.300" viewBox="0 0 9 6"><path d="M.7 .8L4.500 4.600 8.300 .8" fill="none" stroke="#505050" stroke-width="2"/></svg>
 <!-- toolbar -->
 <div style="left:0;top:907px;width:1134px;height:54px;background:#f0f0f0"></div>
</div>
<div class="hwl">
<div style="left:1338px;top:95px;width:509px;height:833px;background:repeating-linear-gradient(180deg,transparent 0 16px,#f0f0f0 16px 17px)"></div>
<div style="left:1904px;top:94px;width:501px;height:850px;background:repeating-linear-gradient(180deg,transparent 0 16px,#f0f0f0 16px 17px)"></div>
<div class="ch" style="left:1304px;top:74px">Sensor</div>
<div class="chr" style="top:74px;left:1547px;width:68px">Aktuell</div>
<div class="chr" style="top:74px;left:1622px;width:68px">Minimal</div>
<div class="chr" style="top:74px;left:1697px;width:68px">Maximal</div>
<div class="chr" style="top:74px;left:1772px;width:70px">Durchschnitt</div>
<div class="sep" style="left:1546px"></div><div class="sep" style="left:1621px"></div><div class="sep" style="left:1696px"></div><div class="sep" style="left:1771px"></div><div class="sep" style="left:1846px"></div>
<div class="ch" style="left:1871px">Sensor</div>
<div class="chr" style="left:2125px;width:68px">Aktuell</div>
<div class="chr" style="left:2200px;width:68px">Minimal</div>
<div class="chr" style="left:2275px;width:48px">Maximal</div>
<div class="chr" style="left:2330px;width:68px">Durchschnitt</div>
<div class="sep" style="left:2124px"></div><div class="sep" style="left:2199px"></div><div class="sep" style="left:2274px"></div><div class="sep" style="left:2329px"></div><div class="sep" style="left:2404px"></div>

<div class="gh" style="left:1338px;top:95px;width:509px"></div>
<svg class="ic" style="left:1303px;top:95px" width="16" height="17"><use href="#i-closed"/></svg>
<svg class="ic" style="left:1322px;top:95px" width="16" height="17"><use href="#i-chip"/></svg>
<div class="gt" style="left:1340px;top:95px">System: MSI MS-7D25</div>
<div class="gh" style="left:1338px;top:129px;width:509px"></div>
<svg class="ic" style="left:1303px;top:129px" width="16" height="17"><use href="#i-open"/></svg>
<svg class="ic" style="left:1322px;top:129px" width="16" height="17"><use href="#i-chip"/></svg>
<div class="gt" style="left:1340px;top:129px">CPU [#0]: Intel Core i5-12600K</div>
<svg class="ic" style="left:1319px;top:146px" width="16" height="17"><use href="#i-open"/></svg>
<div class="hl" style="left:1547px;top:146px;width:75px"></div>
<svg class="ic" style="left:1338px;top:146px" width="16" height="17"><use href="#i-bolt"/></svg>
<div class="nm" style="left:1355px;top:146px">Core VIDs</div>
<div class="v" style="left:1547px;top:146px;width:69px">0.906 V</div>
<div class="v" style="left:1622px;top:146px;width:69px">0.689 V</div>
<div class="v" style="left:1697px;top:146px;width:69px">1.277 V</div>
<div class="v" style="left:1772px;top:146px;width:69px">0.896 V</div>
<div class="st" style="left:1353px;top:163px;width:494px"></div>
<div class="hl" style="left:1547px;top:163px;width:75px"></div>
<svg class="ic" style="left:1338px;top:163px" width="16" height="17"><use href="#i-bolt"/></svg>
<div class="nm" style="left:1355px;top:163px">P-core 0 VID</div>
<div class="v" style="left:1547px;top:163px;width:69px">0.709 V</div>
<div class="v" style="left:1622px;top:163px;width:69px">0.698 V</div>
<div class="v" style="left:1697px;top:163px;width:69px">1.264 V</div>
<div class="v" style="left:1772px;top:163px;width:69px">0.836 V</div>
<div class="hl" style="left:1547px;top:180px;width:75px"></div>
<svg class="ic" style="left:1338px;top:180px" width="16" height="17"><use href="#i-bolt"/></svg>
<div class="nm" style="left:1355px;top:180px">P-core 1 VID</div>
<div class="v" style="left:1547px;top:180px;width:69px">0.712 V</div>
<div class="v" style="left:1622px;top:180px;width:69px">0.697 V</div>
<div class="v" style="left:1697px;top:180px;width:69px">1.262 V</div>
<div class="v" style="left:1772px;top:180px;width:69px">0.867 V</div>
<div class="st" style="left:1353px;top:197px;width:494px"></div>
<div class="hl" style="left:1547px;top:197px;width:75px"></div>
<svg class="ic" style="left:1338px;top:197px" width="16" height="17"><use href="#i-bolt"/></svg>
<div class="nm" style="left:1355px;top:197px">P-core 2 VID</div>
<div class="v" style="left:1547px;top:197px;width:69px">1.198 V</div>
<div class="v" style="left:1622px;top:197px;width:69px">0.698 V</div>
<div class="v" style="left:1697px;top:197px;width:69px">1.277 V</div>
<div class="v" style="left:1772px;top:197px;width:69px">0.979 V</div>
<div class="hl" style="left:1547px;top:214px;width:75px"></div>
<svg class="ic" style="left:1338px;top:214px" width="16" height="17"><use href="#i-bolt"/></svg>
<div class="nm" style="left:1355px;top:214px">P-core 3 VID</div>
<div class="v" style="left:1547px;top:214px;width:69px">1.198 V</div>
<div class="v" style="left:1622px;top:214px;width:69px">0.697 V</div>
<div class="v" style="left:1697px;top:214px;width:69px">1.277 V</div>
<div class="v" style="left:1772px;top:214px;width:69px">0.980 V</div>
<div class="st" style="left:1353px;top:231px;width:494px"></div>
<div class="hl" style="left:1547px;top:231px;width:75px"></div>
<svg class="ic" style="left:1338px;top:231px" width="16" height="17"><use href="#i-bolt"/></svg>
<div class="nm" style="left:1355px;top:231px">P-core 4 VID</div>
<div class="v" style="left:1547px;top:231px;width:69px">1.197 V</div>
<div class="v" style="left:1622px;top:231px;width:69px">0.702 V</div>
<div class="v" style="left:1697px;top:231px;width:69px">1.277 V</div>
<div class="v" style="left:1772px;top:231px;width:69px">0.981 V</div>
<div class="hl" style="left:1547px;top:248px;width:75px"></div>
<svg class="ic" style="left:1338px;top:248px" width="16" height="17"><use href="#i-bolt"/></svg>
<div class="nm" style="left:1355px;top:248px">P-core 5 VID</div>
<div class="v" style="left:1547px;top:248px;width:69px">1.197 V</div>
<div class="v" style="left:1622px;top:248px;width:69px">0.700 V</div>
<div class="v" style="left:1697px;top:248px;width:69px">1.277 V</div>
<div class="v" style="left:1772px;top:248px;width:69px">0.959 V</div>
<div class="st" style="left:1353px;top:265px;width:494px"></div>
<div class="hl" style="left:1547px;top:265px;width:75px"></div>
<svg class="ic" style="left:1338px;top:265px" width="16" height="17"><use href="#i-bolt"/></svg>
<div class="nm" style="left:1355px;top:265px">E-core 6 VID</div>
<div class="v" style="left:1547px;top:265px;width:69px">0.706 V</div>
<div class="v" style="left:1622px;top:265px;width:69px">0.689 V</div>
<div class="v" style="left:1697px;top:265px;width:69px">1.270 V</div>
<div class="v" style="left:1772px;top:265px;width:69px">0.838 V</div>
<div class="hl" style="left:1547px;top:282px;width:75px"></div>
<svg class="ic" style="left:1338px;top:282px" width="16" height="17"><use href="#i-bolt"/></svg>
<div class="nm" style="left:1355px;top:282px">E-core 7 VID</div>
<div class="v" style="left:1547px;top:282px;width:69px">0.706 V</div>
<div class="v" style="left:1622px;top:282px;width:69px">0.692 V</div>
<div class="v" style="left:1697px;top:282px;width:69px">1.250 V</div>
<div class="v" style="left:1772px;top:282px;width:69px">0.839 V</div>
<div class="st" style="left:1353px;top:299px;width:494px"></div>
<div class="hl" style="left:1547px;top:299px;width:75px"></div>
<svg class="ic" style="left:1338px;top:299px" width="16" height="17"><use href="#i-bolt"/></svg>
<div class="nm" style="left:1355px;top:299px">E-core 8 VID</div>
<div class="v" style="left:1547px;top:299px;width:69px">0.711 V</div>
<div class="v" style="left:1622px;top:299px;width:69px">0.689 V</div>
<div class="v" style="left:1697px;top:299px;width:69px">1.253 V</div>
<div class="v" style="left:1772px;top:299px;width:69px">0.841 V</div>
<div class="hl" style="left:1547px;top:316px;width:75px"></div>
<svg class="ic" style="left:1338px;top:316px" width="16" height="17"><use href="#i-bolt"/></svg>
<div class="nm" style="left:1355px;top:316px">E-core 9 VID</div>
<div class="v" style="left:1547px;top:316px;width:69px">0.721 V</div>
<div class="v" style="left:1622px;top:316px;width:69px">0.695 V</div>
<div class="v" style="left:1697px;top:316px;width:69px">1.248 V</div>
<div class="v" style="left:1772px;top:316px;width:69px">0.841 V</div>
<div class="st" style="left:1337px;top:333px;width:510px"></div>
<svg class="ic" style="left:1322px;top:333px" width="16" height="17"><use href="#i-bolt"/></svg>
<div class="nm" style="left:1339px;top:333px">SA VID</div>
<div class="v" style="left:1547px;top:333px;width:69px">1.151 V</div>
<div class="v" style="left:1622px;top:333px;width:69px">1.151 V</div>
<div class="v" style="left:1697px;top:333px;width:69px">1.151 V</div>
<div class="v" style="left:1772px;top:333px;width:69px">1.151 V</div>
<svg class="ic" style="left:1319px;top:350px" width="16" height="17"><use href="#i-closed"/></svg>
<div class="hl" style="left:1547px;top:350px;width:75px"></div>
<svg class="ic" style="left:1338px;top:350px" width="16" height="17"><use href="#i-clock"/></svg>
<div class="nm" style="left:1355px;top:350px">Kern-Takte</div>
<div class="v" style="left:1547px;top:350px;width:69px">2,763.2 MHz</div>
<div class="v" style="left:1622px;top:350px;width:69px">598.5 MHz</div>
<div class="v" style="left:1697px;top:350px;width:69px">5,187.3 MHz</div>
<div class="v" style="left:1772px;top:350px;width:69px">2,526.0 MHz</div>
<div class="st" style="left:1337px;top:367px;width:510px"></div>
<svg class="ic" style="left:1322px;top:367px" width="16" height="17"><use href="#i-clock"/></svg>
<div class="nm" style="left:1339px;top:367px">Bustakt</div>
<div class="v" style="left:1547px;top:367px;width:69px">99.8 MHz</div>
<div class="v" style="left:1622px;top:367px;width:69px">99.8 MHz</div>
<div class="v" style="left:1697px;top:367px;width:69px">99.8 MHz</div>
<div class="v" style="left:1772px;top:367px;width:69px">99.8 MHz</div>
<div class="hl" style="left:1547px;top:384px;width:75px"></div>
<svg class="ic" style="left:1322px;top:384px" width="16" height="17"><use href="#i-clock"/></svg>
<div class="nm" style="left:1339px;top:384px">Ring/LLC Takt</div>
<div class="v" style="left:1547px;top:384px;width:69px">897.8 MHz</div>
<div class="v" style="left:1622px;top:384px;width:69px">798.0 MHz</div>
<div class="v" style="left:1697px;top:384px;width:69px">3,591.2 MHz</div>
<div class="v" style="left:1772px;top:384px;width:69px">1,702.7 MHz</div>
<svg class="ic" style="left:1319px;top:401px" width="16" height="17"><use href="#i-open"/></svg>
<div class="st" style="left:1353px;top:401px;width:494px"></div>
<div class="hl" style="left:1547px;top:401px;width:75px"></div>
<svg class="ic" style="left:1338px;top:401px" width="16" height="17"><use href="#i-clock"/></svg>
<div class="nm" style="left:1355px;top:401px">Effektive Kerntakte</div>
<div class="v" style="left:1547px;top:401px;width:69px">124.4 MHz</div>
<div class="v" style="left:1622px;top:401px;width:69px">0.1 MHz</div>
<div class="v" style="left:1697px;top:401px;width:69px">2,516.8 MHz</div>
<div class="v" style="left:1772px;top:401px;width:69px">128.3 MHz</div>
<div class="hl" style="left:1547px;top:418px;width:75px"></div>
<svg class="ic" style="left:1338px;top:418px" width="16" height="17"><use href="#i-clock"/></svg>
<div class="nm" style="left:1355px;top:418px">P-core 0 T0 Effektiver Takt</div>
<div class="v" style="left:1547px;top:418px;width:69px">661.1 MHz</div>
<div class="v" style="left:1622px;top:418px;width:69px">146.7 MHz</div>
<div class="v" style="left:1697px;top:418px;width:69px">2,516.8 MHz</div>
<div class="v" style="left:1772px;top:418px;width:69px">545.6 MHz</div>
<div class="st" style="left:1353px;top:435px;width:494px"></div>
<div class="hl" style="left:1547px;top:435px;width:75px"></div>
<svg class="ic" style="left:1338px;top:435px" width="16" height="17"><use href="#i-clock"/></svg>
<div class="nm" style="left:1355px;top:435px">P-core 0 T1 Effektiver Takt</div>
<div class="v" style="left:1547px;top:435px;width:69px">16.2 MHz</div>
<div class="v" style="left:1622px;top:435px;width:69px">0.1 MHz</div>
<div class="v" style="left:1697px;top:435px;width:69px">27.8 MHz</div>
<div class="v" style="left:1772px;top:435px;width:69px">9.5 MHz</div>
<div class="hl" style="left:1547px;top:452px;width:75px"></div>
<svg class="ic" style="left:1338px;top:452px" width="16" height="17"><use href="#i-clock"/></svg>
<div class="nm" style="left:1355px;top:452px">P-core 1 T0 Effektiver Takt</div>
<div class="v" style="left:1547px;top:452px;width:69px">75.8 MHz</div>
<div class="v" style="left:1622px;top:452px;width:69px">22.1 MHz</div>
<div class="v" style="left:1697px;top:452px;width:69px">2,159.5 MHz</div>
<div class="v" style="left:1772px;top:452px;width:69px">198.8 MHz</div>
<div class="st" style="left:1353px;top:469px;width:494px"></div>
<div class="hl" style="left:1547px;top:469px;width:75px"></div>
<svg class="ic" style="left:1338px;top:469px" width="16" height="17"><use href="#i-clock"/></svg>
<div class="nm" style="left:1355px;top:469px">P-core 1 T1 Effektiver Takt</div>
<div class="v" style="left:1547px;top:469px;width:69px">47.1 MHz</div>
<div class="v" style="left:1622px;top:469px;width:69px">0.2 MHz</div>
<div class="v" style="left:1697px;top:469px;width:69px">81.9 MHz</div>
<div class="v" style="left:1772px;top:469px;width:69px">49.9 MHz</div>
<div class="hl" style="left:1547px;top:486px;width:75px"></div>
<svg class="ic" style="left:1338px;top:486px" width="16" height="17"><use href="#i-clock"/></svg>
<div class="nm" style="left:1355px;top:486px">P-core 2 T0 Effektiver Takt</div>
<div class="v" style="left:1547px;top:486px;width:69px">0.8 MHz</div>
<div class="v" style="left:1622px;top:486px;width:69px">0.3 MHz</div>
<div class="v" style="left:1697px;top:486px;width:69px">207.5 MHz</div>
<div class="v" style="left:1772px;top:486px;width:69px">5.3 MHz</div>
<div class="st" style="left:1353px;top:503px;width:494px"></div>
<div class="hl" style="left:1547px;top:503px;width:75px"></div>
<svg class="ic" style="left:1338px;top:503px" width="16" height="17"><use href="#i-clock"/></svg>
<div class="nm" style="left:1355px;top:503px">P-core 2 T1 Effektiver Takt</div>
<div class="v" style="left:1547px;top:503px;width:69px">0.6 MHz</div>
<div class="v" style="left:1622px;top:503px;width:69px">0.1 MHz</div>
<div class="v" style="left:1697px;top:503px;width:69px">11.0 MHz</div>
<div class="v" style="left:1772px;top:503px;width:69px">0.7 MHz</div>
<div class="hl" style="left:1547px;top:520px;width:75px"></div>
<svg class="ic" style="left:1338px;top:520px" width="16" height="17"><use href="#i-clock"/></svg>
<div class="nm" style="left:1355px;top:520px">P-core 3 T0 Effektiver Takt</div>
<div class="v" style="left:1547px;top:520px;width:69px">0.8 MHz</div>
<div class="v" style="left:1622px;top:520px;width:69px">0.3 MHz</div>
<div class="v" style="left:1697px;top:520px;width:69px">46.7 MHz</div>
<div class="v" style="left:1772px;top:520px;width:69px">1.9 MHz</div>
<div class="st" style="left:1353px;top:537px;width:494px"></div>
<div class="hl" style="left:1547px;top:537px;width:75px"></div>
<svg class="ic" style="left:1338px;top:537px" width="16" height="17"><use href="#i-clock"/></svg>
<div class="nm" style="left:1355px;top:537px">P-core 3 T1 Effektiver Takt</div>
<div class="v" style="left:1547px;top:537px;width:69px">0.6 MHz</div>
<div class="v" style="left:1622px;top:537px;width:69px">0.1 MHz</div>
<div class="v" style="left:1697px;top:537px;width:69px">11.7 MHz</div>
<div class="v" style="left:1772px;top:537px;width:69px">0.7 MHz</div>
<div class="hl" style="left:1547px;top:554px;width:75px"></div>
<svg class="ic" style="left:1338px;top:554px" width="16" height="17"><use href="#i-clock"/></svg>
<div class="nm" style="left:1355px;top:554px">P-core 4 T0 Effektiver Takt</div>
<div class="v" style="left:1547px;top:554px;width:69px">0.8 MHz</div>
<div class="v" style="left:1622px;top:554px;width:69px">0.3 MHz</div>
<div class="v" style="left:1697px;top:554px;width:69px">11.2 MHz</div>
<div class="v" style="left:1772px;top:554px;width:69px">1.2 MHz</div>
<div class="st" style="left:1353px;top:571px;width:494px"></div>
<div class="hl" style="left:1547px;top:571px;width:75px"></div>
<svg class="ic" style="left:1338px;top:571px" width="16" height="17"><use href="#i-clock"/></svg>
<div class="nm" style="left:1355px;top:571px">P-core 4 T1 Effektiver Takt</div>
<div class="v" style="left:1547px;top:571px;width:69px">0.6 MHz</div>
<div class="v" style="left:1622px;top:571px;width:69px">0.1 MHz</div>
<div class="v" style="left:1697px;top:571px;width:69px">10.9 MHz</div>
<div class="v" style="left:1772px;top:571px;width:69px">0.6 MHz</div>
<div class="hl" style="left:1547px;top:588px;width:75px"></div>
<svg class="ic" style="left:1338px;top:588px" width="16" height="17"><use href="#i-clock"/></svg>
<div class="nm" style="left:1355px;top:588px">P-core 5 T0 Effektiver Takt</div>
<div class="v" style="left:1547px;top:588px;width:69px">0.8 MHz</div>
<div class="v" style="left:1622px;top:588px;width:69px">0.3 MHz</div>
<div class="v" style="left:1697px;top:588px;width:69px">11.2 MHz</div>
<div class="v" style="left:1772px;top:588px;width:69px">1.2 MHz</div>
<div class="st" style="left:1353px;top:605px;width:494px"></div>
<div class="hl" style="left:1547px;top:605px;width:75px"></div>
<svg class="ic" style="left:1338px;top:605px" width="16" height="17"><use href="#i-clock"/></svg>
<div class="nm" style="left:1355px;top:605px">P-core 5 T1 Effektiver Takt</div>
<div class="v" style="left:1547px;top:605px;width:69px">0.6 MHz</div>
<div class="v" style="left:1622px;top:605px;width:69px">0.1 MHz</div>
<div class="v" style="left:1697px;top:605px;width:69px">10.9 MHz</div>
<div class="v" style="left:1772px;top:605px;width:69px">0.6 MHz</div>
<div class="hl" style="left:1547px;top:622px;width:75px"></div>
<svg class="ic" style="left:1338px;top:622px" width="16" height="17"><use href="#i-clock"/></svg>
<div class="nm" style="left:1355px;top:622px">E-core 6 T0 Effektiver Takt</div>
<div class="v" style="left:1547px;top:622px;width:69px">344.5 MHz</div>
<div class="v" style="left:1622px;top:622px;width:69px">59.8 MHz</div>
<div class="v" style="left:1697px;top:622px;width:69px">773.7 MHz</div>
<div class="v" style="left:1772px;top:622px;width:69px">379.9 MHz</div>
<div class="st" style="left:1353px;top:639px;width:494px"></div>
<div class="hl" style="left:1547px;top:639px;width:75px"></div>
<svg class="ic" style="left:1338px;top:639px" width="16" height="17"><use href="#i-clock"/></svg>
<div class="nm" style="left:1355px;top:639px">E-core 7 T0 Effektiver Takt</div>
<div class="v" style="left:1547px;top:639px;width:69px">293.6 MHz</div>
<div class="v" style="left:1622px;top:639px;width:69px">53.1 MHz</div>
<div class="v" style="left:1697px;top:639px;width:69px">621.8 MHz</div>
<div class="v" style="left:1772px;top:639px;width:69px">320.0 MHz</div>
<div class="hl" style="left:1547px;top:656px;width:75px"></div>
<svg class="ic" style="left:1338px;top:656px" width="16" height="17"><use href="#i-clock"/></svg>
<div class="nm" style="left:1355px;top:656px">E-core 8 T0 Effektiver Takt</div>
<div class="v" style="left:1547px;top:656px;width:69px">205.2 MHz</div>
<div class="v" style="left:1622px;top:656px;width:69px">109.2 MHz</div>
<div class="v" style="left:1697px;top:656px;width:69px">534.5 MHz</div>
<div class="v" style="left:1772px;top:656px;width:69px">250.6 MHz</div>
<div class="st" style="left:1353px;top:673px;width:494px"></div>
<div class="hl" style="left:1547px;top:673px;width:75px"></div>
<svg class="ic" style="left:1338px;top:673px" width="16" height="17"><use href="#i-clock"/></svg>
<div class="nm" style="left:1355px;top:673px">E-core 9 T0 Effektiver Takt</div>
<div class="v" style="left:1547px;top:673px;width:69px">341.8 MHz</div>
<div class="v" style="left:1622px;top:673px;width:69px">87.0 MHz</div>
<div class="v" style="left:1697px;top:673px;width:69px">674.9 MHz</div>
<div class="v" style="left:1772px;top:673px;width:69px">286.3 MHz</div>
<div class="hl" style="left:1547px;top:690px;width:75px"></div>
<svg class="ic" style="left:1322px;top:690px" width="16" height="17"><use href="#i-clock"/></svg>
<div class="nm" style="left:1339px;top:690px">Durchschnittlicher effektiver Takt</div>
<div class="v" style="left:1547px;top:690px;width:69px">103.1 MHz</div>
<div class="v" style="left:1622px;top:690px;width:69px">51.3 MHz</div>
<div class="v" style="left:1697px;top:690px;width:69px">310.1 MHz</div>
<div class="v" style="left:1772px;top:690px;width:69px">108.3 MHz</div>
<svg class="ic" style="left:1319px;top:707px" width="16" height="17"><use href="#i-closed"/></svg>
<div class="st" style="left:1353px;top:707px;width:494px"></div>
<svg class="ic" style="left:1338px;top:707px" width="16" height="17"><use href="#i-clock"/></svg>
<div class="nm" style="left:1355px;top:707px">Kern-Auslastung</div>
<div class="v" style="left:1547px;top:707px;width:69px">6.4 %</div>
<div class="v" style="left:1622px;top:707px;width:69px">0.0 %</div>
<div class="v" style="left:1697px;top:707px;width:69px">58.1 %</div>
<div class="v" style="left:1772px;top:707px;width:69px">6.0 %</div>
<div class="hl" style="left:1547px;top:724px;width:75px"></div>
<svg class="ic" style="left:1322px;top:724px" width="16" height="17"><use href="#i-clock"/></svg>
<div class="nm" style="left:1339px;top:724px">Maximale CPU-/Thread-Auslastung</div>
<div class="v" style="left:1547px;top:724px;width:69px">38.8 %</div>
<div class="v" style="left:1622px;top:724px;width:69px">27.3 %</div>
<div class="v" style="left:1697px;top:724px;width:69px">58.1 %</div>
<div class="v" style="left:1772px;top:724px;width:69px">43.1 %</div>
<div class="st" style="left:1337px;top:741px;width:510px"></div>
<svg class="ic" style="left:1322px;top:741px" width="16" height="17"><use href="#i-clock"/></svg>
<div class="nm" style="left:1339px;top:741px">Gesamte CPU-Auslastung</div>
<div class="v" style="left:1547px;top:741px;width:69px">6.4 %</div>
<div class="v" style="left:1622px;top:741px;width:69px">4.2 %</div>
<div class="v" style="left:1697px;top:741px;width:69px">8.6 %</div>
<div class="v" style="left:1772px;top:741px;width:69px">6.0 %</div>
<svg class="ic" style="left:1322px;top:758px" width="16" height="17"><use href="#i-clock"/></svg>
<div class="nm" style="left:1339px;top:758px">Takt-Modulation auf Anforderung</div>
<div class="v" style="left:1547px;top:758px;width:69px">100.0 %</div>
<div class="v" style="left:1622px;top:758px;width:69px">100.0 %</div>
<div class="v" style="left:1697px;top:758px;width:69px">100.0 %</div>
<div class="v" style="left:1772px;top:758px;width:69px">100.0 %</div>
<svg class="ic" style="left:1319px;top:775px" width="16" height="17"><use href="#i-closed"/></svg>
<div class="st" style="left:1353px;top:775px;width:494px"></div>
<div class="hl" style="left:1547px;top:775px;width:75px"></div>
<svg class="ic" style="left:1338px;top:775px" width="16" height="17"><use href="#i-clock"/></svg>
<div class="nm" style="left:1355px;top:775px">Kern-Effizienz</div>
<div class="v" style="left:1547px;top:775px;width:69px">3.5 %</div>
<div class="v" style="left:1622px;top:775px;width:69px">0.0 %</div>
<div class="v" style="left:1697px;top:775px;width:69px">69.0 %</div>
<div class="v" style="left:1772px;top:775px;width:69px">3.7 %</div>
<div class="hl" style="left:1547px;top:792px;width:75px"></div>
<svg class="ic" style="left:1322px;top:792px" width="16" height="17"><use href="#i-clock"/></svg>
<div class="nm" style="left:1339px;top:792px">Gesamte CPU-Effizienz</div>
<div class="v" style="left:1547px;top:792px;width:69px">3.5 %</div>
<div class="v" style="left:1622px;top:792px;width:69px">2.0 %</div>
<div class="v" style="left:1697px;top:792px;width:69px">8.9 %</div>
<div class="v" style="left:1772px;top:792px;width:69px">3.7 %</div>
<svg class="ic" style="left:1319px;top:809px" width="16" height="17"><use href="#i-closed"/></svg>
<div class="st" style="left:1353px;top:809px;width:494px"></div>
<div class="hl" style="left:1547px;top:809px;width:75px"></div>
<svg class="ic" style="left:1338px;top:809px" width="16" height="17"><use href="#i-clock"/></svg>
<div class="nm" style="left:1355px;top:809px">Kern-Takt-Multiplikatoren</div>
<div class="v" style="left:1547px;top:809px;width:69px">27.7 x</div>
<div class="v" style="left:1622px;top:809px;width:69px">6.0 x</div>
<div class="v" style="left:1697px;top:809px;width:69px">52.0 x</div>
<div class="v" style="left:1772px;top:809px;width:69px">25.3 x</div>
<div class="hl" style="left:1547px;top:826px;width:75px"></div>
<svg class="ic" style="left:1322px;top:826px" width="16" height="17"><use href="#i-clock"/></svg>
<div class="nm" style="left:1339px;top:826px">Uncore Verhältnis</div>
<div class="v" style="left:1547px;top:826px;width:69px">9.0 x</div>
<div class="v" style="left:1622px;top:826px;width:69px">8.0 x</div>
<div class="v" style="left:1697px;top:826px;width:69px">36.0 x</div>
<div class="v" style="left:1772px;top:826px;width:69px">17.1 x</div>
<div class="st" style="left:1338px;top:843px;width:509px"></div>
<div class="gh" style="left:1338px;top:860px;width:509px"></div>
<svg class="ic" style="left:1303px;top:860px" width="16" height="17"><use href="#i-open"/></svg>
<svg class="ic" style="left:1322px;top:860px" width="16" height="17"><use href="#i-chip"/></svg>
<div class="gt" style="left:1340px;top:860px">CPU [#0]: Intel Core i5-12600K: DTS</div>
<svg class="ic" style="left:1319px;top:877px" width="16" height="17"><use href="#i-closed"/></svg>
<div class="st" style="left:1353px;top:877px;width:494px"></div>
<div class="hl" style="left:1547px;top:877px;width:75px"></div>
<svg class="ic" style="left:1338px;top:877px" width="16" height="17"><use href="#i-temp"/></svg>
<div class="nm" style="left:1355px;top:877px">Kern-Temperaturen</div>
<div class="v" style="left:1547px;top:877px;width:69px">26 °C</div>
<div class="v" style="left:1622px;top:877px;width:69px">21 °C</div>
<div class="v" style="left:1697px;top:877px;width:69px">44 °C</div>
<div class="v" style="left:1772px;top:877px;width:69px">26 °C</div>
<svg class="ic" style="left:1319px;top:894px" width="16" height="17"><use href="#i-closed"/></svg>
<div class="hl" style="left:1547px;top:894px;width:75px"></div>
<svg class="ic" style="left:1338px;top:894px" width="16" height="17"><use href="#i-temp"/></svg>
<div class="nm" style="left:1355px;top:894px">Kerndistanz zu TjMAX</div>
<div class="v" style="left:1547px;top:894px;width:69px">74 °C</div>
<div class="v" style="left:1622px;top:894px;width:69px">56 °C</div>
<div class="v" style="left:1697px;top:894px;width:69px">79 °C</div>
<div class="v" style="left:1772px;top:894px;width:69px">74 °C</div>
<div class="st" style="left:1337px;top:911px;width:510px"></div>
<svg class="ic" style="left:1322px;top:911px" width="16" height="17"><use href="#i-temp"/></svg>
<div class="nm" style="left:1339px;top:911px">CPU-Paket</div>
<div class="v" style="left:1547px;top:911px;width:69px">30 °C</div>
<div class="v" style="left:1622px;top:911px;width:69px">28 °C</div>
<div class="v" style="left:1697px;top:911px;width:69px">44 °C</div>
<div class="v" style="left:1772px;top:911px;width:69px">30 °C</div>
<svg class="ic" style="left:1888px;top:94px" width="16" height="17"><use href="#i-clock"/></svg>
<div class="nm" style="left:1905.5px;top:94px">Paket-/Ring-Leistungsgrenze überschritten</div>
<div class="v" style="left:2125px;top:94px;width:69px">Nein</div>
<div class="v" style="left:2200px;top:94px;width:69px">Nein</div>
<div class="v" style="left:2275px;top:94px;width:49px">Nein</div>
<div class="st" style="left:1904.5px;top:111px;width:500.5px"></div>
<div class="gh" style="left:1904.5px;top:128px;width:500.5px"></div>
<svg class="ic" style="left:1869px;top:128px" width="16" height="17"><use href="#i-open"/></svg>
<svg class="ic" style="left:1888px;top:128px" width="16" height="17"><use href="#i-chip"/></svg>
<div class="gt" style="left:1906.5px;top:128px">CPU [#0]: Intel Core i5-12600K: Enhanced</div>
<div class="st" style="left:1903.5px;top:145px;width:501.5px"></div>
<svg class="ic" style="left:1888px;top:145px" width="16" height="17"><use href="#i-temp"/></svg>
<div class="nm" style="left:1905.5px;top:145px">CPU-Paket</div>
<div class="v" style="left:2125px;top:145px;width:69px">30 °C</div>
<div class="v" style="left:2200px;top:145px;width:69px">29 °C</div>
<div class="v" style="left:2275px;top:145px;width:49px">43 °C</div>
<div class="v" style="left:2330px;top:145px;width:69px">30 °C</div>
<svg class="ic" style="left:1888px;top:162px" width="16" height="17"><use href="#i-temp"/></svg>
<div class="nm" style="left:1905.5px;top:162px">CPU IA-Kerne</div>
<div class="v" style="left:2125px;top:162px;width:69px">30 °C</div>
<div class="v" style="left:2200px;top:162px;width:69px">26 °C</div>
<div class="v" style="left:2275px;top:162px;width:49px">43 °C</div>
<div class="v" style="left:2330px;top:162px;width:69px">30 °C</div>
<div class="st" style="left:1903.5px;top:179px;width:501.5px"></div>
<div class="hl" style="left:2125px;top:179px;width:75px"></div>
<svg class="ic" style="left:1888px;top:179px" width="16" height="17"><use href="#i-temp"/></svg>
<div class="nm" style="left:1905.5px;top:179px">CPU GT-Kerne (Grafik)</div>
<div class="v" style="left:2125px;top:179px;width:69px">26 °C</div>
<div class="v" style="left:2200px;top:179px;width:69px">25 °C</div>
<div class="v" style="left:2275px;top:179px;width:49px">28 °C</div>
<div class="v" style="left:2330px;top:179px;width:69px">27 °C</div>
<svg class="ic" style="left:1885px;top:196px" width="16" height="17"><use href="#i-closed"/></svg>
<svg class="ic" style="left:1904px;top:196px" width="16" height="17"><use href="#i-bolt"/></svg>
<div class="nm" style="left:1921.5px;top:196px">Spannungsversatz</div>
<div class="v" style="left:2200px;top:196px;width:69px">0.000 V</div>
<div class="v" style="left:2275px;top:196px;width:49px">0.000 V</div>
<div class="st" style="left:1903.5px;top:213px;width:501.5px"></div>
<svg class="ic" style="left:1888px;top:213px" width="16" height="17"><use href="#i-bolt"/></svg>
<div class="nm" style="left:1905.5px;top:213px">VDDQ TX Spannung</div>
<div class="v" style="left:2125px;top:213px;width:69px">1.200 V</div>
<div class="v" style="left:2200px;top:213px;width:69px">1.200 V</div>
<div class="v" style="left:2275px;top:213px;width:49px">1.200 V</div>
<div class="v" style="left:2330px;top:213px;width:69px">1.200 V</div>
<div class="hl" style="left:2125px;top:230px;width:75px"></div>
<svg class="ic" style="left:1888px;top:230px" width="16" height="17"><use href="#i-bolt"/></svg>
<div class="nm" style="left:1905.5px;top:230px">VR VCC Strom (SVID IOUT)</div>
<div class="v" style="left:2125px;top:230px;width:69px">9.688 A</div>
<div class="v" style="left:2200px;top:230px;width:69px">6.055 A</div>
<div class="v" style="left:2275px;top:230px;width:49px">33.90...</div>
<div class="v" style="left:2330px;top:230px;width:69px">15.179 A</div>
<div class="st" style="left:1903.5px;top:247px;width:501.5px"></div>
<div class="hl" style="left:2125px;top:247px;width:75px"></div>
<svg class="ic" style="left:1888px;top:247px" width="16" height="17"><use href="#i-bolt"/></svg>
<div class="nm" style="left:1905.5px;top:247px">CPU-Gesamt-Leistungsaufnahme</div>
<div class="v" style="left:2125px;top:247px;width:69px">8.372 W</div>
<div class="v" style="left:2200px;top:247px;width:69px">4.569 W</div>
<div class="v" style="left:2275px;top:247px;width:49px">23.22...</div>
<div class="v" style="left:2330px;top:247px;width:69px">8.888 W</div>
<div class="hl" style="left:2125px;top:264px;width:75px"></div>
<svg class="ic" style="left:1888px;top:264px" width="16" height="17"><use href="#i-bolt"/></svg>
<div class="nm" style="left:1905.5px;top:264px">IA-Kerne Leistungsaufnahme</div>
<div class="v" style="left:2125px;top:264px;width:69px">6.607 W</div>
<div class="v" style="left:2200px;top:264px;width:69px">2.815 W</div>
<div class="v" style="left:2275px;top:264px;width:49px">21.46...</div>
<div class="v" style="left:2330px;top:264px;width:69px">7.123 W</div>
<div class="st" style="left:1903.5px;top:281px;width:501.5px"></div>
<div class="hl" style="left:2125px;top:281px;width:75px"></div>
<svg class="ic" style="left:1888px;top:281px" width="16" height="17"><use href="#i-bolt"/></svg>
<div class="nm" style="left:1905.5px;top:281px">Rest-of-Chip-Leistungsaufnahme</div>
<div class="v" style="left:2125px;top:281px;width:69px">0.770 W</div>
<div class="v" style="left:2200px;top:281px;width:69px">0.758 W</div>
<div class="v" style="left:2275px;top:281px;width:49px">0.809 W</div>
<div class="v" style="left:2330px;top:281px;width:69px">0.771 W</div>
<div class="hl" style="left:2125px;top:298px;width:75px"></div>
<svg class="ic" style="left:1888px;top:298px" width="16" height="17"><use href="#i-bolt"/></svg>
<div class="nm" style="left:1905.5px;top:298px">PL1-Leistungsgrenzwert (Statisch)</div>
<div class="v" style="left:2125px;top:298px;width:69px">4,095.9 W</div>
<div class="v" style="left:2200px;top:298px;width:69px">4,095.9 W</div>
<div class="v" style="left:2275px;top:298px;width:49px">4,095...</div>
<div class="v" style="left:2330px;top:298px;width:69px">4,095.9 W</div>
<div class="st" style="left:1903.5px;top:315px;width:501.5px"></div>
<div class="hl" style="left:2125px;top:315px;width:75px"></div>
<svg class="ic" style="left:1888px;top:315px" width="16" height="17"><use href="#i-bolt"/></svg>
<div class="nm" style="left:1905.5px;top:315px">PL2-Leistungsgrenzwert (Statisch)</div>
<div class="v" style="left:2125px;top:315px;width:69px">4,095.9 W</div>
<div class="v" style="left:2200px;top:315px;width:69px">4,095.9 W</div>
<div class="v" style="left:2275px;top:315px;width:49px">4,095...</div>
<div class="v" style="left:2330px;top:315px;width:69px">4,095.9 W</div>
<svg class="ic" style="left:1885px;top:332px" width="16" height="17"><use href="#i-closed"/></svg>
<svg class="ic" style="left:1904px;top:332px" width="16" height="17"><use href="#i-clock"/></svg>
<div class="nm" style="left:1921.5px;top:332px">OC-Multiplikatorgrenzwerte</div>
<div class="v" style="left:2200px;top:332px;width:69px">29.0 x</div>
<div class="v" style="left:2275px;top:332px;width:49px">52.0 x</div>
<div class="gh" style="left:1904.5px;top:366px;width:500.5px"></div>
<svg class="ic" style="left:1869px;top:366px" width="16" height="17"><use href="#i-closed"/></svg>
<svg class="ic" style="left:1888px;top:366px" width="16" height="17"><use href="#i-chip"/></svg>
<div class="gt" style="left:1906.5px;top:366px">CPU [#0]: Intel Core i5-12600K: C-State Belegung</div>
<div class="st" style="left:1904.5px;top:383px;width:500.5px"></div>
<div class="gh" style="left:1904.5px;top:400px;width:500.5px"></div>
<svg class="ic" style="left:1869px;top:400px" width="16" height="17"><use href="#i-closed"/></svg>
<svg class="ic" style="left:1888px;top:400px" width="16" height="17"><use href="#i-chip"/></svg>
<div class="gt" style="left:1906.5px;top:400px">Speicher-Zeitangaben</div>
<div class="st" style="left:1904.5px;top:417px;width:500.5px"></div>
<div class="gh" style="left:1904.5px;top:434px;width:500.5px"></div>
<svg class="ic" style="left:1869px;top:434px" width="16" height="17"><use href="#i-closed"/></svg>
<svg class="ic" style="left:1888px;top:434px" width="16" height="17"><use href="#i-chip"/></svg>
<div class="gt" style="left:1906.5px;top:434px">CPU [#0]: Intel Core i5-12600K: Gründe für Leistungsgrenzwerte</div>
<div class="st" style="left:1904.5px;top:451px;width:500.5px"></div>
<div class="gh" style="left:1904.5px;top:468px;width:500.5px"></div>
<svg class="ic" style="left:1869px;top:468px" width="16" height="17"><use href="#i-open"/></svg>
<svg class="ic" style="left:1888px;top:468px" width="16" height="17"><use href="#i-chip"/></svg>
<div class="gt" style="left:1906.5px;top:468px">MSI PRO Z690-A DDR4(MS-7D25) (Nuvoton NCT6687D)</div>
<div class="st" style="left:1903.5px;top:485px;width:501.5px"></div>
<div class="hl" style="left:2125px;top:485px;width:75px"></div>
<svg class="ic" style="left:1888px;top:485px" width="16" height="17"><use href="#i-temp"/></svg>
<div class="nm" style="left:1905.5px;top:485px">CPU</div>
<div class="v" style="left:2125px;top:485px;width:69px">30.0 °C</div>
<div class="v" style="left:2200px;top:485px;width:69px">29.0 °C</div>
<div class="v" style="left:2275px;top:485px;width:49px">40.0 °C</div>
<div class="v" style="left:2330px;top:485px;width:69px">30.0 °C</div>
<div class="hl" style="left:2125px;top:502px;width:75px"></div>
<svg class="ic" style="left:1888px;top:502px" width="16" height="17"><use href="#i-temp"/></svg>
<div class="nm" style="left:1905.5px;top:502px">System</div>
<div class="v" style="left:2125px;top:502px;width:69px">35.5 °C</div>
<div class="v" style="left:2200px;top:502px;width:69px">34.5 °C</div>
<div class="v" style="left:2275px;top:502px;width:49px">35.5 °C</div>
<div class="v" style="left:2330px;top:502px;width:69px">35.2 °C</div>
<div class="st" style="left:1903.5px;top:519px;width:501.5px"></div>
<svg class="ic" style="left:1888px;top:519px" width="16" height="17"><use href="#i-temp"/></svg>
<div class="nm" style="left:1905.5px;top:519px">MOS</div>
<div class="v" style="left:2125px;top:519px;width:69px">33.5 °C</div>
<div class="v" style="left:2200px;top:519px;width:69px">33.0 °C</div>
<div class="v" style="left:2275px;top:519px;width:49px">33.5 °C</div>
<div class="v" style="left:2330px;top:519px;width:69px">33.3 °C</div>
<svg class="ic" style="left:1888px;top:536px" width="16" height="17"><use href="#i-temp"/></svg>
<div class="nm" style="left:1905.5px;top:536px">PCH</div>
<div class="v" style="left:2125px;top:536px;width:69px">53.0 °C</div>
<div class="v" style="left:2200px;top:536px;width:69px">52.0 °C</div>
<div class="v" style="left:2275px;top:536px;width:49px">53.0 °C</div>
<div class="v" style="left:2330px;top:536px;width:69px">53.0 °C</div>
<div class="st" style="left:1903.5px;top:553px;width:501.5px"></div>
<div class="hl" style="left:2125px;top:553px;width:75px"></div>
<svg class="ic" style="left:1888px;top:553px" width="16" height="17"><use href="#i-temp"/></svg>
<div class="nm" style="left:1905.5px;top:553px">CPU Socket</div>
<div class="v" style="left:2125px;top:553px;width:69px">32.0 °C</div>
<div class="v" style="left:2200px;top:553px;width:69px">31.5 °C</div>
<div class="v" style="left:2275px;top:553px;width:49px">32.0 °C</div>
<div class="v" style="left:2330px;top:553px;width:69px">31.5 °C</div>
<svg class="ic" style="left:1888px;top:570px" width="16" height="17"><use href="#i-temp"/></svg>
<div class="nm" style="left:1905.5px;top:570px">T0</div>
<div class="v" style="left:2125px;top:570px;width:69px">17.5 °C</div>
<div class="v" style="left:2200px;top:570px;width:69px">17.5 °C</div>
<div class="v" style="left:2275px;top:570px;width:49px">18.0 °C</div>
<div class="v" style="left:2330px;top:570px;width:69px">17.5 °C</div>
<div class="st" style="left:1903.5px;top:587px;width:501.5px"></div>
<svg class="ic" style="left:1888px;top:587px" width="16" height="17"><use href="#i-temp"/></svg>
<div class="nm" style="left:1905.5px;top:587px">T1</div>
<div class="v" style="left:2125px;top:587px;width:69px">31.0 °C</div>
<div class="v" style="left:2200px;top:587px;width:69px">31.0 °C</div>
<div class="v" style="left:2275px;top:587px;width:49px">31.0 °C</div>
<div class="v" style="left:2330px;top:587px;width:69px">31.0 °C</div>
<svg class="ic" style="left:1888px;top:604px" width="16" height="17"><use href="#i-bolt"/></svg>
<div class="nm" style="left:1905.5px;top:604px">+12V</div>
<div class="v" style="left:2125px;top:604px;width:69px">12.048 V</div>
<div class="v" style="left:2200px;top:604px;width:69px">12.024 V</div>
<div class="v" style="left:2275px;top:604px;width:49px">12.048 V</div>
<div class="v" style="left:2330px;top:604px;width:69px">12.047 V</div>
<div class="st" style="left:1903.5px;top:621px;width:501.5px"></div>
<div class="hl" style="left:2125px;top:621px;width:75px"></div>
<svg class="ic" style="left:1888px;top:621px" width="16" height="17"><use href="#i-bolt"/></svg>
<div class="nm" style="left:1905.5px;top:621px">+5V</div>
<div class="v" style="left:2125px;top:621px;width:69px">4.980 V</div>
<div class="v" style="left:2200px;top:621px;width:69px">4.950 V</div>
<div class="v" style="left:2275px;top:621px;width:49px">4.980 V</div>
<div class="v" style="left:2330px;top:621px;width:69px">4.972 V</div>
<div class="hl" style="left:2125px;top:638px;width:75px"></div>
<svg class="ic" style="left:1888px;top:638px" width="16" height="17"><use href="#i-bolt"/></svg>
<div class="nm" style="left:1905.5px;top:638px">Vcore</div>
<div class="v" style="left:2125px;top:638px;width:69px">0.716 V</div>
<div class="v" style="left:2200px;top:638px;width:69px">0.714 V</div>
<div class="v" style="left:2275px;top:638px;width:49px">1.238 V</div>
<div class="v" style="left:2330px;top:638px;width:69px">0.834 V</div>
<div class="st" style="left:1903.5px;top:655px;width:501.5px"></div>
<div class="hl" style="left:2125px;top:655px;width:75px"></div>
<svg class="ic" style="left:1888px;top:655px" width="16" height="17"><use href="#i-bolt"/></svg>
<div class="nm" style="left:1905.5px;top:655px">VIN3</div>
<div class="v" style="left:2125px;top:655px;width:69px">0.718 V</div>
<div class="v" style="left:2200px;top:655px;width:69px">0.716 V</div>
<div class="v" style="left:2275px;top:655px;width:49px">1.242 V</div>
<div class="v" style="left:2330px;top:655px;width:69px">0.836 V</div>
<svg class="ic" style="left:1888px;top:672px" width="16" height="17"><use href="#i-bolt"/></svg>
<div class="nm" style="left:1905.5px;top:672px">DRAM</div>
<div class="v" style="left:2125px;top:672px;width:69px">1.356 V</div>
<div class="v" style="left:2200px;top:672px;width:69px">1.356 V</div>
<div class="v" style="left:2275px;top:672px;width:49px">1.360 V</div>
<div class="v" style="left:2330px;top:672px;width:69px">1.358 V</div>
<div class="st" style="left:1903.5px;top:689px;width:501.5px"></div>
<div class="hl" style="left:2125px;top:689px;width:75px"></div>
<svg class="ic" style="left:1888px;top:689px" width="16" height="17"><use href="#i-bolt"/></svg>
<div class="nm" style="left:1905.5px;top:689px">VIN5</div>
<div class="v" style="left:2125px;top:689px;width:69px">1.156 V</div>
<div class="v" style="left:2200px;top:689px;width:69px">1.156 V</div>
<div class="v" style="left:2275px;top:689px;width:49px">1.158 V</div>
<div class="v" style="left:2330px;top:689px;width:69px">1.156 V</div>
<svg class="ic" style="left:1888px;top:706px" width="16" height="17"><use href="#i-bolt"/></svg>
<div class="nm" style="left:1905.5px;top:706px">CPU AUX</div>
<div class="v" style="left:2125px;top:706px;width:69px">1.820 V</div>
<div class="v" style="left:2200px;top:706px;width:69px">1.816 V</div>
<div class="v" style="left:2275px;top:706px;width:49px">1.824 V</div>
<div class="v" style="left:2330px;top:706px;width:69px">1.820 V</div>
<div class="st" style="left:1903.5px;top:723px;width:501.5px"></div>
<div class="hl" style="left:2125px;top:723px;width:75px"></div>
<svg class="ic" style="left:1888px;top:723px" width="16" height="17"><use href="#i-bolt"/></svg>
<div class="nm" style="left:1905.5px;top:723px">VIN7</div>
<div class="v" style="left:2125px;top:723px;width:69px">1.536 V</div>
<div class="v" style="left:2200px;top:723px;width:69px">1.530 V</div>
<div class="v" style="left:2275px;top:723px;width:49px">1.538 V</div>
<div class="v" style="left:2330px;top:723px;width:69px">1.535 V</div>
<div class="hl" style="left:2125px;top:740px;width:75px"></div>
<svg class="ic" style="left:1888px;top:740px" width="16" height="17"><use href="#i-bolt"/></svg>
<div class="nm" style="left:1905.5px;top:740px">+3,3V</div>
<div class="v" style="left:2125px;top:740px;width:69px">3.304 V</div>
<div class="v" style="left:2200px;top:740px;width:69px">3.272 V</div>
<div class="v" style="left:2275px;top:740px;width:49px">3.308 V</div>
<div class="v" style="left:2330px;top:740px;width:69px">3.297 V</div>
<div class="st" style="left:1903.5px;top:757px;width:501.5px"></div>
<svg class="ic" style="left:1888px;top:757px" width="16" height="17"><use href="#i-bolt"/></svg>
<div class="nm" style="left:1905.5px;top:757px">3VSB</div>
<div class="v" style="left:2125px;top:757px;width:69px">3.356 V</div>
<div class="v" style="left:2200px;top:757px;width:69px">3.352 V</div>
<div class="v" style="left:2275px;top:757px;width:49px">3.360 V</div>
<div class="v" style="left:2330px;top:757px;width:69px">3.356 V</div>
<svg class="ic" style="left:1888px;top:774px" width="16" height="17"><use href="#i-bolt"/></svg>
<div class="nm" style="left:1905.5px;top:774px">AVSB</div>
<div class="v" style="left:2125px;top:774px;width:69px">3.352 V</div>
<div class="v" style="left:2200px;top:774px;width:69px">3.352 V</div>
<div class="v" style="left:2275px;top:774px;width:49px">3.360 V</div>
<div class="v" style="left:2330px;top:774px;width:69px">3.355 V</div>
<div class="st" style="left:1903.5px;top:791px;width:501.5px"></div>
<svg class="ic" style="left:1888px;top:791px" width="16" height="17"><use href="#i-bolt"/></svg>
<div class="nm" style="left:1905.5px;top:791px">VTT</div>
<div class="v" style="left:2125px;top:791px;width:69px">1.072 V</div>
<div class="v" style="left:2200px;top:791px;width:69px">1.072 V</div>
<div class="v" style="left:2275px;top:791px;width:49px">1.074 V</div>
<div class="v" style="left:2330px;top:791px;width:69px">1.072 V</div>
<svg class="ic" style="left:1888px;top:808px" width="16" height="17"><use href="#i-bolt"/></svg>
<div class="nm" style="left:1905.5px;top:808px">VBAT</div>
<div class="v" style="left:2125px;top:808px;width:69px">3.176 V</div>
<div class="v" style="left:2200px;top:808px;width:69px">3.172 V</div>
<div class="v" style="left:2275px;top:808px;width:49px">3.180 V</div>
<div class="v" style="left:2330px;top:808px;width:69px">3.176 V</div>
<div class="st" style="left:1903.5px;top:825px;width:501.5px"></div>
<svg class="ic" style="left:1888px;top:825px" width="16" height="17"><use href="#i-bolt"/></svg>
<div class="nm" style="left:1905.5px;top:825px">VREF</div>
<div class="v" style="left:2125px;top:825px;width:69px">1.824 V</div>
<div class="v" style="left:2200px;top:825px;width:69px">1.824 V</div>
<div class="v" style="left:2275px;top:825px;width:49px">1.828 V</div>
<div class="v" style="left:2330px;top:825px;width:69px">1.824 V</div>
<div class="hl" style="left:2125px;top:842px;width:75px"></div>
<svg class="ic" style="left:1888px;top:842px" width="16" height="17"><use href="#i-fan"/></svg>
<div class="nm" style="left:1905.5px;top:842px">CPU</div>
<div class="v" style="left:2125px;top:842px;width:69px">356 RPM</div>
<div class="v" style="left:2200px;top:842px;width:69px">354 RPM</div>
<div class="v" style="left:2275px;top:842px;width:49px">361 RPM</div>
<div class="v" style="left:2330px;top:842px;width:69px">358 RPM</div>
<div class="st" style="left:1903.5px;top:859px;width:501.5px"></div>
<div class="hl" style="left:2125px;top:859px;width:75px"></div>
<svg class="ic" style="left:1888px;top:859px" width="16" height="17"><use href="#i-fan"/></svg>
<div class="nm" style="left:1905.5px;top:859px">PUMP1</div>
<div class="v" style="left:2125px;top:859px;width:69px">347 RPM</div>
<div class="v" style="left:2200px;top:859px;width:69px">346 RPM</div>
<div class="v" style="left:2275px;top:859px;width:49px">354 RPM</div>
<div class="v" style="left:2330px;top:859px;width:69px">350 RPM</div>
<div class="hl" style="left:2125px;top:876px;width:75px"></div>
<svg class="ic" style="left:1888px;top:876px" width="16" height="17"><use href="#i-fan"/></svg>
<div class="nm" style="left:1905.5px;top:876px">System 1</div>
<div class="v" style="left:2125px;top:876px;width:69px">1,071 RPM</div>
<div class="v" style="left:2200px;top:876px;width:69px">1,030 RPM</div>
<div class="v" style="left:2275px;top:876px;width:49px">1,078 ...</div>
<div class="v" style="left:2330px;top:876px;width:69px">1,055 RPM</div>
<div class="st" style="left:1903.5px;top:893px;width:501.5px"></div>
<div class="hl" style="left:2125px;top:893px;width:75px"></div>
<svg class="ic" style="left:1888px;top:893px" width="16" height="17"><use href="#i-fan"/></svg>
<div class="nm" style="left:1905.5px;top:893px">System 2</div>
<div class="v" style="left:2125px;top:893px;width:69px">509 RPM</div>
<div class="v" style="left:2200px;top:893px;width:69px">502 RPM</div>
<div class="v" style="left:2275px;top:893px;width:49px">512 RPM</div>
<div class="v" style="left:2330px;top:893px;width:69px">508 RPM</div>
<svg class="ic" style="left:1888px;top:910px" width="16" height="17"><use href="#i-fan"/></svg>
<div class="nm" style="left:1905.5px;top:910px">System 3</div>
<div class="v" style="left:2125px;top:910px;width:69px">360 RPM</div>
<div class="v" style="left:2200px;top:910px;width:69px">353 RPM</div>
<div class="v" style="left:2275px;top:910px;width:49px">362 RPM</div>
<div class="v" style="left:2330px;top:910px;width:69px">358 RPM</div>
<div class="st" style="left:1904.5px;top:927px;width:500.5px"></div>
</div>
<svg width="0" height="0" style="position:absolute"><defs>
<linearGradient id="gmon" x1="0" y1="0" x2="1" y2="1"><stop offset="0" stop-color="#7cc4f5"/><stop offset=".35" stop-color="#2389e0"/><stop offset=".6" stop-color="#1b74d0"/><stop offset="1" stop-color="#3d9ae8"/></linearGradient>
<linearGradient id="gx" x1="0" y1="0" x2="1" y2="1"><stop offset="0" stop-color="#2380c4"/><stop offset=".55" stop-color="#3ba3e6"/><stop offset="1" stop-color="#2a8dd2"/></linearGradient>
<linearGradient id="ggear" x1="0" y1="0" x2="1" y2="1"><stop offset="0" stop-color="#f2f2f2"/><stop offset=".5" stop-color="#cfd2d3"/><stop offset="1" stop-color="#9ea3a5"/></linearGradient>
<linearGradient id="gplus" x1="0" y1="0" x2="0" y2="1"><stop offset="0" stop-color="#bfe267"/><stop offset="1" stop-color="#98c62f"/></linearGradient>
<linearGradient id="garr" x1="0" y1="0" x2="0" y2="1"><stop offset="0" stop-color="#4aa5ee"/><stop offset="1" stop-color="#1f7fd8"/></linearGradient>
</defs></svg>
<div class="abs tbb" style="left:1298px;top:952px"><svg style="position:absolute;left:4.800px;top:8.500px" width="32" height="18" viewBox="0 0 32 18"><path d="M0 9L8.500 0v4.200h5v9.600h-5V18z M31.200 9L22.700 0v4.200h-5v9.600h5V18z" fill="url(#garr)" stroke="#2a86da" stroke-width=".5"/></svg></div>
<div class="abs tbb" style="left:1342px;top:952px"><svg style="position:absolute;left:4.400px;top:8.500px" width="32" height="18" viewBox="0 0 32 18"><path d="M14.200 9L5.700 0v4.200H.7v9.600h5V18z M15 9l8.500-9v4.200h5v9.600h-5V18z" fill="url(#garr)" stroke="#2a86da" stroke-width=".5"/></svg></div>
<div class="abs tbb" style="left:2128px;top:952px"><svg style="position:absolute;left:0;top:0" width="40" height="33" viewBox="0 0 40 33"><path d="M19.500 9.500h9v8M12.500 19v3.500h8" fill="none" stroke="#808890" stroke-width="1.100"/><ellipse cx="12.500" cy="16.800" rx="4.800" ry="2" fill="#9a9a9a"/><ellipse cx="26.500" cy="30" rx="4.800" ry="2" fill="#9a9a9a"/><path d="M5.800 2.400L19.900 3.900 18 15.700 4.300 12.700z" fill="url(#gmon)" stroke="#b9d4ea" stroke-width=".7"/><path d="M21 16.400L34.700 18 33.200 29 19 26z" fill="url(#gmon)" stroke="#b9d4ea" stroke-width=".7"/></svg></div>
<div class="abs" style="left:2196px;top:961px;font:11px/15px 'DejaVu Sans Condensed','Liberation Sans',sans-serif;white-space:pre">0:04:15</div>
<div class="abs tbb" style="left:2239px;top:952px"><svg style="position:absolute;left:4px;top:.5px" width="32" height="32" viewBox="0 0 32 32"><circle cx="16" cy="16" r="15.200" fill="#fdfdfd" stroke="#4a4a4a" stroke-width="1.100"/><path d="M16 1.500v4.500M16 26v4.500M1.500 16H6M26 16h4.500" stroke="#3a3a3a" stroke-width="1.500"/><path d="M23.250 3.440l-1.750 3.030M28.560 8.750l-3.030 1.750M28.560 23.250l-3.030-1.750M23.250 28.560l-1.750-3.030M8.750 28.560l1.750-3.030M3.440 23.250l3.030-1.750M3.440 8.750l3.030 1.750M8.750 3.440l1.750 3.030" stroke="#3a3a3a" stroke-width="1.100"/><path d="M16 16L17.400 3.500" stroke="#111" stroke-width="1.200"/><path d="M15 16h9" stroke="#111" stroke-width="2.400"/><circle cx="16" cy="16" r="1.700" fill="#111"/></svg></div>
<div class="abs tbb" style="left:2284px;top:952px"><svg style="position:absolute;left:0;top:0" width="40" height="33" viewBox="0 0 40 33"><path d="M8.500 29.800h22" stroke="#c9c9c9" stroke-width="1.500"/><path d="M9.500 2.300h17l5 5.700V29h-22z" fill="#fdfdfd" stroke="#bdbdbd" stroke-width=".9"/><path d="M26.500 2.300v5.700h5z" fill="#fff" stroke="#c4c4c4" stroke-width=".8"/><path d="M13 7.500h12M13 9.500h15.500M13 11.500h15.500M13 13.500h15.500M13 15.500h15.500M13 17.500h15.500M13 19.500h15.500M13 21.500h15.500M13 23.500h15.500M13 7.500v16M17.500 7.500v16M23 7.500v16" stroke="#d3d6dc" stroke-width=".8" fill="none"/><path d="M26.500 18.400h6v3.100h3.100v6h-3.100v3.100h-6v-3.100h-3.100v-6h3.100z" fill="url(#gplus)" stroke="#86b526" stroke-width=".8"/></svg></div>
<div class="abs tbb" style="left:2331px;top:952px"><svg style="position:absolute;left:4px;top:1px" width="33" height="33" viewBox="0 0 24 24"><use href="#p-gear" fill="url(#ggear)" stroke="#a3a7a9" stroke-width=".45"/><circle cx="12" cy="11.600" r="5.600" fill="none" stroke="#8d9294" stroke-width="1.300"/><circle cx="12" cy="11.700" r="3.900" fill="#e6e6e6" stroke="#c2c5c6" stroke-width=".6"/></svg></div>
<div class="abs tbb" style="left:2377px;top:952px;border:2px solid #0a64ad"><svg style="position:absolute;left:7.300px;top:3.800px" width="24" height="24" viewBox="0 0 24 24"><path d="M0 5.200L5.200 0 12 6.800 18.800 0 24 5.200 17.200 12 24 18.800 18.800 24 12 17.200 5.200 24 0 18.800 6.800 12z" fill="url(#gx)"/></svg></div>
<div class="abs" style="left:2430.500px;top:38px;width:3px;height:963px;background:#000"></div>
<div class="abs" style="left:1296px;top:999.500px;width:1137px;height:2px;background:#2e2e2e"></div><div class="abs" style="left:1296px;top:944px;width:2px;height:57px;background:#6e6e6e"></div>

</body></html>
